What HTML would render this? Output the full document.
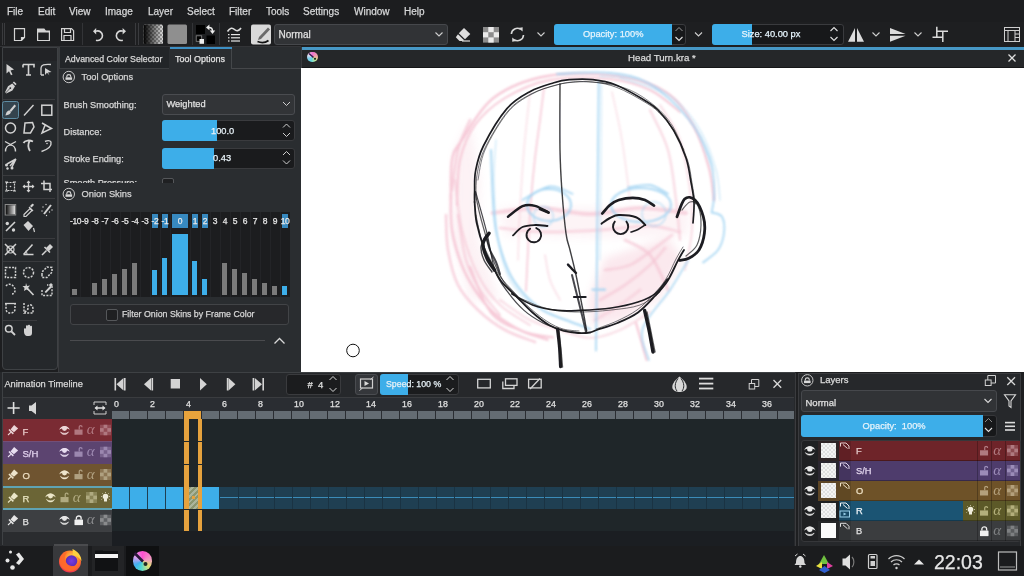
<!DOCTYPE html>
<html><head><meta charset="utf-8">
<style>
*{box-sizing:border-box}
html,body{margin:0;padding:0;width:1024px;height:576px;overflow:hidden;background:#1d1e20;font-family:"Liberation Sans",sans-serif;color:#d6d7d8}
.a{position:absolute}
.t{position:absolute;white-space:nowrap;line-height:1;-webkit-text-stroke:0.25px currentColor}
svg{position:absolute;overflow:visible;z-index:5}
.t{z-index:6}
</style></head><body>
<!-- MENU BAR -->
<div class="a" style="left:0;top:0;width:1024px;height:22px;background:#1c1d1f"></div>
<div class="t" style="left:7px;top:7px;font-size:10px">File</div>
<div class="t" style="left:38px;top:7px;font-size:10px">Edit</div>
<div class="t" style="left:69px;top:7px;font-size:10px">View</div>
<div class="t" style="left:105px;top:7px;font-size:10px">Image</div>
<div class="t" style="left:148px;top:7px;font-size:10px">Layer</div>
<div class="t" style="left:187px;top:7px;font-size:10px">Select</div>
<div class="t" style="left:229px;top:7px;font-size:10px">Filter</div>
<div class="t" style="left:266px;top:7px;font-size:10px">Tools</div>
<div class="t" style="left:303px;top:7px;font-size:10px">Settings</div>
<div class="t" style="left:354px;top:7px;font-size:10px">Window</div>
<div class="t" style="left:404px;top:7px;font-size:10px">Help</div>

<!-- TOOLBAR -->
<div class="a" style="left:0;top:22px;width:1024px;height:25px;background:#1e1f21"></div>
<div class="a" style="left:0;top:45.5px;width:301px;height:1.5px;background:#333437"></div>
<div class="a" style="left:2px;top:23px;width:1px;height:22px;background:#3a3b3e"></div>
<div class="a" style="left:4px;top:23px;width:1px;height:22px;background:#3a3b3e"></div>
<div class="a" style="left:82px;top:23px;width:1px;height:22px;background:#333437"></div>
<div class="a" style="left:135px;top:23px;width:1px;height:22px;background:#3a3b3e"></div>
<div class="a" style="left:138px;top:23px;width:1px;height:22px;background:#3a3b3e"></div>
<div class="a" style="left:192px;top:23px;width:1px;height:22px;background:#333437"></div>
<div class="a" style="left:219px;top:23px;width:1px;height:22px;background:#333437"></div>
<svg style="left:0;top:0" width="1024" height="47" viewBox="0 0 1024 47">
 <g fill="none" stroke="#d4d4d4" stroke-width="1.2">
  <!-- new -->
  <path d="M14.5 28.6 H24.5 V37.5 L21.5 40.5 H14.5 Z"/>
  <path d="M24.5 37.5 H21.5 V40.5" fill="#e0e0e0"/>
  <!-- open -->
  <path d="M37.6 29 H44 L45.5 31 H49.4 V40.5 H37.6 Z"/>
  <path d="M37.6 31.5 V29 H44 L45.5 31 H49.4 V32.5 H37.6 Z" fill="#d4d4d4" stroke="none"/>
  <!-- save -->
  <path d="M61.6 28.6 H71.5 L73.6 30.7 V40.5 H61.6 Z"/>
  <path d="M64.5 28.6 V32.5 H70.5 V28.6 M64 40.5 V35.5 H71 V40.5"/>
 </g>
 <g fill="none" stroke="#d8d8d8" stroke-width="1.6">
  <path d="M96 31.2 A4.8 4.8 0 1 1 96 40.2"/>
  <path d="M122.8 31.2 A4.8 4.8 0 1 0 122.8 40.2"/>
 </g>
 <path d="M93 31.2 L96.2 28 V34.4 Z" fill="#d8d8d8"/>
 <path d="M126 31.2 L122.6 28 V34.4 Z" fill="#d8d8d8"/>
 <!-- gradient -->
 <defs>
  <pattern id="chk" width="4" height="4" patternUnits="userSpaceOnUse" x="0" y="0">
   <rect width="4" height="4" fill="#9a9a9a"/><rect width="2" height="2" fill="#dcdcdc"/><rect x="2" y="2" width="2" height="2" fill="#dcdcdc"/>
  </pattern>
  <linearGradient id="grd" x1="0" x2="1"><stop offset="0" stop-color="#000"/><stop offset="1" stop-color="#000" stop-opacity="0"/></linearGradient>
 </defs>
 <rect x="143.5" y="24.5" width="19.5" height="19.5" rx="1.5" fill="url(#chk)"/>
 <rect x="143.5" y="24.5" width="19.5" height="19.5" rx="1.5" fill="url(#grd)"/>
 <rect x="167.5" y="24.5" width="19.5" height="19.5" rx="1.5" fill="#8f8f8f"/>
 <!-- fg bg -->
 <rect x="196" y="25" width="9" height="9" fill="#000"/>
 <rect x="206.5" y="35.5" width="8.5" height="8.5" fill="#000"/>
 <rect x="196.2" y="35.8" width="5.5" height="5.5" fill="#000" stroke="#8a8a8a" stroke-width="0.8"/>
 <rect x="199.5" y="39" width="4.5" height="4.8" fill="#eee"/>
 <path d="M206 27.4 L209.4 24.6 V30.2 Z M212.5 34 L209.8 30.6 H215.2 Z" fill="#ececec"/>
 <path d="M209 27.4 C211.5 27.4 212.5 28.5 212.5 31" fill="none" stroke="#ececec" stroke-width="1.5"/>
 <!-- presets -->
 <path d="M227.5 31.5 C230 27.5 232.5 27.5 234.5 29.5 C236.5 31.5 239 31 241 28" fill="none" stroke="#dcdcdc" stroke-width="1.6"/>
 <g fill="#e6e6e6"><rect x="228" y="34" width="1.5" height="1.2"/><rect x="231" y="34" width="9" height="1.2"/>
 <rect x="228" y="37.2" width="1.5" height="1.2"/><rect x="231" y="37.2" width="9" height="1.2"/>
 <rect x="228" y="40.4" width="1.5" height="1.2"/><rect x="231" y="40.4" width="9" height="1.2"/></g>
 <!-- brush tip -->
 <rect x="251" y="24.5" width="20" height="20" rx="2" fill="#d9d9d9"/>
 <path d="M259 37 L268 27.5 L270 29.5 L261 39 L258 40 Z" fill="#6a6a6a"/>
 <path d="M257.5 41.5 C261 43 265 43 268.5 40.5" stroke="#111" stroke-width="1.8" fill="none"/>
 <!-- eraser -->
 <path d="M464 28 L470.3 34 L465 39.3 L458.8 33.3 Z" fill="#dedede"/>
 <path d="M458 34.2 L464.2 40.2 L462.6 41 H459.5 L455.8 37.2 Z" fill="#dedede"/>
 <path d="M462 41 H470" stroke="#dedede" stroke-width="1.2"/>
 <!-- checker -->
 <g>
  <rect x="483" y="27" width="16" height="15.6" fill="#8c8c8c"/>
  <rect x="488.3" y="27" width="5.4" height="5.2" fill="#ebebeb"/>
  <rect x="483" y="32.2" width="5.3" height="5.2" fill="#ebebeb"/><rect x="493.7" y="32.2" width="5.3" height="5.2" fill="#ebebeb"/>
  <rect x="488.3" y="37.4" width="5.4" height="5.2" fill="#ebebeb"/>
 </g>
 <!-- refresh -->
 <g transform="rotate(-10 517.3 34.3)">
 <g fill="none" stroke="#d8d8d8" stroke-width="1.6">
  <path d="M511.5 33 A6 6 0 0 1 521.5 30"/>
  <path d="M523.3 36 A6 6 0 0 1 513.3 39"/>
 </g>
 <path d="M519.5 28.3 L523.8 28.3 L523 32.5 Z M515.3 40.7 L511 40.7 L511.8 36.5 Z" fill="#d8d8d8"/>
 </g>
 <!-- chevrons -->
 <g fill="none" stroke="#cfcfcf" stroke-width="1.1">
  <path d="M435.5 32.5 L439 36 L442.5 32.5"/>
  <path d="M537.5 32.5 L541 36 L544.5 32.5"/>
  <path d="M695 32.5 L698.5 36 L702 32.5"/>
  <path d="M872.5 32.5 L876 36 L879.5 32.5"/>
  <path d="M914.5 32.5 L918 36 L921.5 32.5"/>
 </g>
 <!-- mirror -->
 <path d="M855 28 V41.7 H848 Z M857 28 V41.7 H864 Z" fill="#dcdcdc"/>
 <path d="M890 28 L905.6 34 H890 Z M890 35.8 H905.6 L890 41.7 Z" fill="#dcdcdc"/>
 <!-- crop-like -->
 <g fill="none" stroke="#dcdcdc" stroke-width="1.5">
  <path d="M936.8 26.8 V37.2 M932.5 37.2 H943 M936.8 31.2 H948 M942.8 31.2 V42"/>
 </g>
 <!-- right layout icon -->
 <rect x="1004.5" y="27.5" width="15" height="14" fill="none" stroke="#cfcfcf" stroke-width="1"/>
 <path d="M1004.5 30.5 H1019.5 M1008 30.5 V41.5 M1015 30.5 V41.5 M1015 34 H1019.5 M1015 37.5 H1019.5" stroke="#cfcfcf" stroke-width="1" fill="none"/>
</svg>
<!-- combo Normal -->
<div class="a" style="left:274px;top:23.5px;width:174px;height:21px;background:#313336;border:1px solid #46484c;border-radius:3px"></div>
<div class="t" style="left:278.5px;top:30px;font-size:10px;color:#e0e0e0">Normal</div>
<!-- opacity -->
<div class="a" style="left:554px;top:23.5px;width:132px;height:21px;background:#17181a;border:1px solid #3a3b3e;border-radius:3px"></div>
<div class="a" style="left:554px;top:23.5px;width:118px;height:21px;background:#3daee9;border-radius:3px 0 0 3px"></div>
<div class="t" style="left:583px;top:30px;font-size:9.3px;color:#e6f4fc">Opacity: 100%</div>
<!-- size -->
<div class="a" style="left:711.5px;top:23.5px;width:132px;height:21px;background:#17181a;border:1px solid #3a3b3e;border-radius:3px"></div>
<div class="a" style="left:711.5px;top:23.5px;width:40.5px;height:21px;background:#3daee9;border-radius:3px 0 0 3px"></div>
<div class="t" style="left:741.5px;top:30px;font-size:9.3px;color:#e6f4fc">Size: 40.00 px</div>
<svg style="left:0;top:0" width="1024" height="47">
 <g fill="none" stroke="#9a9a9a" stroke-width="1">
  <path d="M675.5 31 L679 27.5 L682.5 31"/>
 </g>
 <g fill="none" stroke="#e0e0e0" stroke-width="1.1">
  <path d="M675.5 37 L679 40.5 L682.5 37"/>
  <path d="M830.5 31 L834 27.5 L837.5 31"/>
  <path d="M830.5 37 L834 40.5 L837.5 37"/>
 </g>
</svg>

<!-- TOOLBOX -->
<div class="a" style="left:2px;top:47px;width:56px;height:323px;background:#25282b;border:1px solid #3e4144;border-radius:0 0 4px 4px"></div>
<div class="a" style="left:3px;top:48px;width:54px;height:13px;background:#222326"></div>
<svg style="left:0;top:0" width="60" height="372">
 <g stroke="#3a3b3e" stroke-width="1">
  <path d="M3 99.5 H55 M3 175.5 H55 M3 198.5 H55 M3 238.5 H55 M3 261.5 H55 M3 320.5 H37"/>
 </g>
 <rect x="2.5" y="101.5" width="16" height="17" rx="2" fill="#34444e" stroke="#5d8ca3" stroke-width="1"/>
 <g fill="#d2d2d2" stroke="#d2d2d2">
  <!-- select shape arrow -->
  <path d="M6.5 64 L14 69.5 L10.5 70.5 L12.5 74.5 L11 75.2 L9 71.3 L6.5 73.5 Z" stroke="none"/>
  <!-- T -->
  <path d="M23 64.5 H34 V67.5 M23 64.5 V67.5 M28.5 64.5 V75 M26 75 H31" fill="none" stroke-width="1.6"/>
  <!-- shape edit -->
  <path d="M41 75 V68 C41 65 44 64 51 64.5 M41 75 H44" fill="none" stroke-width="1.3"/>
  <path d="M45 68 L51.5 72 L48 72.5 L49.5 75.5 L47 72.8 L45 75 Z" stroke="none"/>
  <!-- pen (calligraphy) -->
  <path d="M5 92.3 L8 86.2 L12.3 83.6 L15 86.3 L12.4 90.6 L6.3 93.6 Z" stroke="none"/>
  <path d="M12.8 82.6 L14 81.4 L16.6 84 L15.4 85.2 Z" stroke="none"/>
  <circle cx="10.3" cy="88.1" r="0.9" fill="#25282b" stroke="none"/>
  <path d="M5.6 93 L10 88.4" stroke="#25282b" stroke-width="0.7"/>
  <!-- brush -->
  <path d="M14.5 104.5 L16 106 L11 112 L9.5 110.5 Z" stroke="none"/>
  <path d="M9.5 110.5 C7 110.5 6 113 5.5 115.5 C8 115 10.5 114.5 11 112 Z" stroke="none"/>
  <!-- line -->
  <path d="M24 115.5 L33.5 105" fill="none" stroke-width="1.4"/>
  <!-- rect -->
  <rect x="41.8" y="105.2" width="10" height="10" fill="none" stroke-width="1.5"/>
  <!-- circle -->
  <circle cx="10.5" cy="128" r="5" fill="none" stroke-width="1.5"/>
  <!-- polygon -->
  <path d="M25 123 L32.5 122.5 L34 127 L30.5 133 L24 133 Z" fill="none" stroke-width="1.5"/>
  <!-- polyline -->
  <path d="M42 123 L51.5 128.5 L42 133 L45.5 124" fill="none" stroke-width="1.5"/>
  <!-- bezier -->
  <path d="M5.5 151.5 C5.5 143 15.5 143 15.5 151.5 M5 141.5 L10.5 144.5 L16 141.5" fill="none" stroke-width="1.4"/>
  <!-- freehand path -->
  <path d="M23.5 143 C25 140 30 140 33 141.5 M29.5 141 C28 144 28 148 30 151" fill="none" stroke-width="1.8"/>
  <!-- dynamic -->
  <path d="M41.5 151.5 C46 150 52 147 51 142 C50 140 47 140.5 45 141.5" fill="none" stroke-width="1.4"/>
  <circle cx="47" cy="143.5" r="0.8" stroke="none"/>
  <!-- multibrush -->
  <path d="M16 159 L7 164 M16 159 L12 167 M16 159 L10 166" fill="none" stroke-width="1.5"/>
  <circle cx="6.5" cy="165" r="1.5" stroke="none"/><circle cx="12" cy="168" r="1.5" stroke="none"/><circle cx="7.5" cy="168.5" r="1.2" stroke="none"/>
  <!-- transform -->
  <rect x="6.5" y="182.5" width="8" height="8" fill="none" stroke-width="1.2" stroke-dasharray="2 1"/>
  <path d="M5 182 H8 M13 182 H16 M5 191 H8 M13 191 H16" stroke-width="1"/>
  <circle cx="10.5" cy="186.5" r="0.8" stroke="none"/>
  <!-- move -->
  <path d="M28.5 181 V192 M23 186.5 H34" fill="none" stroke-width="1.4"/>
  <path d="M28.5 180.5 L26.5 183 H30.5 Z M28.5 192.5 L26.5 190 H30.5 Z M22.5 186.5 L25 184.5 V188.5 Z M34.5 186.5 L32 184.5 V188.5 Z" stroke="none"/>
  <!-- crop -->
  <path d="M44 180.5 V189.5 H52 M41 183.5 H50 V192" fill="none" stroke-width="1.5"/>
  <!-- gradient tool -->
  <rect x="5.2" y="204.5" width="10.5" height="10.5" fill="none" stroke="#8a8a8a" stroke-width="1"/>
  <!-- color picker -->
  <path d="M24 214.5 L30 208.5 L32 210.5 L26 216.5 L24 216.5 Z" fill="none" stroke-width="1.2"/>
  <path d="M30 206 L32 204 C33 203 34.5 204.5 33.5 205.5 L31.5 207.5 Z" stroke="none"/>
  <path d="M29 207 L33 211" stroke-width="1.3"/>
  <!-- smart patch -->
  <path d="M44 214 L51 205" stroke-width="2"/>
  <g stroke="none"><circle cx="43" cy="207" r="0.7"/><circle cx="46" cy="204.5" r="0.7"/><circle cx="49.5" cy="212" r="0.7"/><circle cx="52" cy="210" r="0.7"/><circle cx="46.5" cy="215.5" r="0.7"/><circle cx="42" cy="211" r="0.7"/></g>
  <!-- percent (deform) -->
  <path d="M6 231 L15 222" stroke-width="1.6"/>
  <circle cx="7.3" cy="223.5" r="1.7" stroke="none"/><circle cx="13.5" cy="230" r="1.7" stroke="none"/>
  <!-- fill -->
  <path d="M23.5 225 L28 221 L33 226 L28.5 231 Z" stroke="none"/>
  <path d="M33.5 228 L34.5 232" stroke-width="1.2"/>
  <!-- assistant -->
  <circle cx="10.5" cy="249.5" r="3.5" fill="none" stroke-width="1.2"/>
  <path d="M5 244 L16 255 M16 244 L5 255" fill="none" stroke-width="1.5"/>
  <!-- measure -->
  <path d="M23.5 254.5 H33.5 M23.5 254.5 L32.5 244.5" fill="none" stroke-width="1.5"/>
  <path d="M27 254.5 C27 252 26 251 25.5 251" fill="none" stroke-width="1"/>
  <!-- ref pin -->
  <path d="M46 248 L50 244 L53 247 L49 251 Z" stroke="none"/>
  <path d="M44.5 247 L50 252.5 M46.5 250.5 L42 255" stroke-width="1.5"/>
  <!-- rect select -->
  <rect x="5.5" y="267.5" width="10" height="10" fill="none" stroke-width="1.5" stroke-dasharray="2 1.3"/>
  <circle cx="28.5" cy="272.5" r="5" fill="none" stroke-width="1.5" stroke-dasharray="2 1.3"/>
  <path d="M42 275 L42 272 L47 267 L52 267.5 L52 272 L47 277.5 L42 277.5 Z" fill="none" stroke-width="1.5" stroke-dasharray="2 1.3"/>
  <!-- freehand sel -->
  <path d="M6 286 C8 283 12 284 14 287 C16 290 15 294 12 294" fill="none" stroke-width="1.5" stroke-dasharray="2 1.3"/>
  <!-- wand -->
  <path d="M27 288 L33.5 295" stroke-width="1.6"/>
  <path d="M26 283 L27 286 L30 285.5 L28 288 L29.5 291 L26.5 289.5 L24 291 L24.5 288 L22.5 286 L25.5 286 Z" stroke="none"/>
  <!-- similar sel -->
  <path d="M42 290 V295.5 H52 V285 H47" fill="none" stroke-width="1.4" stroke-dasharray="2 1.3"/>
  <path d="M44.5 292 L50 286 L51.5 287.5 L46 293 Z M49 285 L51 283 L53 285 L51 287 Z" stroke="none"/>
  <!-- bezier sel -->
  <path d="M6 303.5 V309 C6 314.5 15 314.5 15 309 V303.5" fill="none" stroke-width="1.5" stroke-dasharray="2 1.3"/>
  <path d="M5 303.5 H16" stroke-width="1.3"/>
  <!-- path sel -->
  <path d="M24 303 V313 H33 V309 C33 303 26 304 28 309 L24 313" fill="none" stroke-width="1.5" stroke-dasharray="2 1.3"/>
  <!-- zoom -->
  <circle cx="8.8" cy="328.8" r="3.3" fill="none" stroke-width="1.5"/>
  <path d="M11.5 331.5 L15 335" stroke-width="1.8"/>
  <!-- pan -->
  <path d="M24 329 C24 328 26 328 26 329 V326 C26 325 28 325 28 326 V325.5 C28 324.5 30 324.5 30 325.5 V326.5 C30 325.5 32 325.5 32 326.5 V333 C32 335 31 336 29 336 H27 C25.5 336 24 334 24 332 Z" stroke="none"/>
 </g>
 <!-- gradient fill inside -->
 <defs><linearGradient id="tg" x1="0" x2="1"><stop offset="0" stop-color="#111"/><stop offset="1" stop-color="#ddd"/></linearGradient></defs>
 <rect x="6" y="205.3" width="9" height="9" fill="url(#tg)"/>
</svg>

<!-- DOCKER -->
<div class="a" style="left:58px;top:47px;width:243px;height:325px;background:#2a2d30"></div>
<div class="a" style="left:58px;top:47px;width:1px;height:325px;background:#3a3b3e"></div>
<!-- tabs -->
<div class="a" style="left:58.5px;top:47px;width:111px;height:21.5px;background:#222528;border:1px solid #3a3d40;border-top:none"></div>
<div class="a" style="left:169px;top:47px;width:62.5px;height:22px;background:#2a2d30;border-right:1px solid #44474a"></div>
<div class="a" style="left:169.5px;top:47px;width:62px;height:2px;background:#3d8fc4"></div>
<div class="a" style="left:232px;top:68px;width:69px;height:1px;background:#45474a"></div>
<div class="t" style="left:65px;top:55px;font-size:8.8px;color:#d8d8d8">Advanced Color Selector</div>
<div class="t" style="left:175px;top:55px;font-size:9px;color:#e2e2e2">Tool Options</div>
<!-- Tool options header -->
<svg style="left:0;top:0" width="300" height="372">
 <g fill="none" stroke="#c8c8c8" stroke-width="1">
  <circle cx="68.8" cy="77" r="5.7"/>
  <circle cx="68.8" cy="194" r="5.7"/>
 </g>
 <g fill="#d8d8d8">
  <path d="M65.5 79.8 V77.3 H72.1 V79.8 Z" fill="#d8d8d8"/><path d="M66.8 77.3 V76.4 C66.8 74 70.8 74 70.8 76.4 V77.3" fill="none" stroke="#d8d8d8" stroke-width="1.1"/>
  <path d="M65.5 196.8 V194.3 H72.1 V196.8 Z" fill="#d8d8d8"/><path d="M66.8 194.3 V193.4 C66.8 191 70.8 191 70.8 193.4 V194.3" fill="none" stroke="#d8d8d8" stroke-width="1.1"/>
 </g>
</svg>
<div class="t" style="left:81.5px;top:73px;font-size:9.3px;color:#d4d4d4">Tool Options</div>
<div class="t" style="left:63.5px;top:100.5px;font-size:9.2px;color:#d8d8d8">Brush Smoothing:</div>
<div class="t" style="left:63.5px;top:128px;font-size:9.2px;color:#d8d8d8">Distance:</div>
<div class="t" style="left:63.5px;top:154.5px;font-size:9.2px;color:#d8d8d8">Stroke Ending:</div>
<div class="a" style="left:58px;top:176px;width:243px;height:7px;overflow:hidden"><div class="t" style="left:5.5px;top:3px;font-size:9.2px;color:#d8d8d8">Smooth Pressure:</div><div class="a" style="left:104px;top:2px;width:12px;height:12px;border:1px solid #55575a;border-radius:2px;background:#1f2022"></div></div>
<!-- combo weighted -->
<div class="a" style="left:162px;top:93.5px;width:133px;height:21px;background:#323437;border:1px solid #4a4c50;border-radius:3px"></div>
<div class="t" style="left:166.5px;top:99.5px;font-size:9.3px;color:#e0e0e0">Weighted</div>
<!-- sliders -->
<div class="a" style="left:162px;top:120px;width:133px;height:21px;background:#1a1b1d;border:1px solid #3a3b3e;border-radius:3px"></div>
<div class="a" style="left:162px;top:120px;width:55px;height:21px;background:#3daee9;border-radius:3px 0 0 3px"></div>
<div class="t" style="left:211px;top:126.5px;font-size:9.3px;color:#e8f2f8">100.0</div>
<div class="a" style="left:162px;top:147.5px;width:133px;height:21px;background:#1a1b1d;border:1px solid #3a3b3e;border-radius:3px"></div>
<div class="a" style="left:162px;top:147.5px;width:51.5px;height:21px;background:#3daee9;border-radius:3px 0 0 3px"></div>
<div class="t" style="left:213px;top:153.5px;font-size:9.3px;color:#e8f2f8">0.43</div>
<svg style="left:0;top:0" width="300" height="372">
 <g fill="none" stroke="#d0d0d0" stroke-width="1">
  <path d="M283 102 L286.5 105.5 L290 102"/>
  <path d="M283 127.5 L286.5 124 L290 127.5 M283 133 L286.5 136.5 L290 133"/>
  <path d="M283 155 L286.5 151.5 L290 155 M283 160.5 L286.5 164 L290 160.5"/>
 </g>
</svg>
<!-- Onion skins -->
<div class="t" style="left:81.5px;top:190px;font-size:9.3px;color:#d4d4d4">Onion Skins</div>
<div class="a" style="left:70px;top:212px;width:220px;height:85px;background:#1c1d1f"></div>
<div class="a" style="left:72px;top:289px;width:5px;height:6px;background:#7b7b7b"></div>
<div class="t" style="left:70px;top:216.5px;width:10px;text-align:center;font-size:8.5px;letter-spacing:-0.4px;color:#e8e8e8">-10</div>
<div class="a" style="left:80px;top:212px;width:1px;height:85px;background:#232427"></div>
<div class="t" style="left:80px;top:216.5px;width:10px;text-align:center;font-size:8.5px;letter-spacing:-0.4px;color:#e8e8e8">-9</div>
<div class="a" style="left:90px;top:212px;width:1px;height:85px;background:#232427"></div>
<div class="a" style="left:92px;top:282.7px;width:5px;height:12.300000000000011px;background:#7b7b7b"></div>
<div class="t" style="left:90px;top:216.5px;width:10px;text-align:center;font-size:8.5px;letter-spacing:-0.4px;color:#e8e8e8">-8</div>
<div class="a" style="left:100px;top:212px;width:1px;height:85px;background:#232427"></div>
<div class="a" style="left:102px;top:278.8px;width:5px;height:16.19999999999999px;background:#7b7b7b"></div>
<div class="t" style="left:100px;top:216.5px;width:10px;text-align:center;font-size:8.5px;letter-spacing:-0.4px;color:#e8e8e8">-7</div>
<div class="a" style="left:110px;top:212px;width:1px;height:85px;background:#232427"></div>
<div class="a" style="left:112px;top:273.5px;width:5px;height:21.5px;background:#7b7b7b"></div>
<div class="t" style="left:110px;top:216.5px;width:10px;text-align:center;font-size:8.5px;letter-spacing:-0.4px;color:#e8e8e8">-6</div>
<div class="a" style="left:120px;top:212px;width:1px;height:85px;background:#232427"></div>
<div class="a" style="left:122px;top:269px;width:5px;height:26px;background:#7b7b7b"></div>
<div class="t" style="left:120px;top:216.5px;width:10px;text-align:center;font-size:8.5px;letter-spacing:-0.4px;color:#e8e8e8">-5</div>
<div class="a" style="left:130px;top:212px;width:1px;height:85px;background:#232427"></div>
<div class="a" style="left:132px;top:263px;width:5px;height:32px;background:#7b7b7b"></div>
<div class="t" style="left:130px;top:216.5px;width:10px;text-align:center;font-size:8.5px;letter-spacing:-0.4px;color:#e8e8e8">-4</div>
<div class="a" style="left:140px;top:212px;width:1px;height:85px;background:#232427"></div>
<div class="t" style="left:140px;top:216.5px;width:10px;text-align:center;font-size:8.5px;letter-spacing:-0.4px;color:#e8e8e8">-3</div>
<div class="a" style="left:150px;top:212px;width:1px;height:85px;background:#232427"></div>
<div class="a" style="left:152px;top:213.5px;width:6px;height:14px;background:#3789bf"></div>
<div class="a" style="left:152px;top:269.7px;width:5px;height:25.30000000000001px;background:#3daee9"></div>
<div class="t" style="left:150px;top:216.5px;width:10px;text-align:center;font-size:8.5px;letter-spacing:-0.4px;color:#e8e8e8">-2</div>
<div class="a" style="left:160px;top:212px;width:1px;height:85px;background:#232427"></div>
<div class="a" style="left:162px;top:213.5px;width:6px;height:14px;background:#3789bf"></div>
<div class="a" style="left:162px;top:258px;width:5px;height:37px;background:#3daee9"></div>
<div class="t" style="left:160px;top:216.5px;width:10px;text-align:center;font-size:8.5px;letter-spacing:-0.4px;color:#e8e8e8">-1</div>
<div class="a" style="left:170px;top:212px;width:1px;height:85px;background:#232427"></div>
<div class="a" style="left:172px;top:213.5px;width:16px;height:14px;background:#3789bf"></div>
<div class="a" style="left:172px;top:233.5px;width:16px;height:61.5px;background:#3daee9"></div>
<div class="t" style="left:170px;top:216.5px;width:20px;text-align:center;font-size:8.5px;letter-spacing:-0.4px;color:#e8e8e8">0</div>
<div class="a" style="left:190px;top:212px;width:1px;height:85px;background:#232427"></div>
<div class="a" style="left:192px;top:213.5px;width:6px;height:14px;background:#3789bf"></div>
<div class="a" style="left:192px;top:261px;width:5px;height:34px;background:#3daee9"></div>
<div class="t" style="left:190px;top:216.5px;width:10px;text-align:center;font-size:8.5px;letter-spacing:-0.4px;color:#e8e8e8">1</div>
<div class="a" style="left:200px;top:212px;width:1px;height:85px;background:#232427"></div>
<div class="a" style="left:202px;top:213.5px;width:6px;height:14px;background:#3789bf"></div>
<div class="a" style="left:202px;top:278.8px;width:5px;height:16.19999999999999px;background:#3daee9"></div>
<div class="t" style="left:200px;top:216.5px;width:10px;text-align:center;font-size:8.5px;letter-spacing:-0.4px;color:#e8e8e8">2</div>
<div class="a" style="left:210px;top:212px;width:1px;height:85px;background:#232427"></div>
<div class="t" style="left:210px;top:216.5px;width:10px;text-align:center;font-size:8.5px;letter-spacing:-0.4px;color:#e8e8e8">3</div>
<div class="a" style="left:220px;top:212px;width:1px;height:85px;background:#232427"></div>
<div class="a" style="left:222px;top:263px;width:5px;height:32px;background:#7b7b7b"></div>
<div class="t" style="left:220px;top:216.5px;width:10px;text-align:center;font-size:8.5px;letter-spacing:-0.4px;color:#e8e8e8">4</div>
<div class="a" style="left:230px;top:212px;width:1px;height:85px;background:#232427"></div>
<div class="a" style="left:232px;top:269px;width:5px;height:26px;background:#7b7b7b"></div>
<div class="t" style="left:230px;top:216.5px;width:10px;text-align:center;font-size:8.5px;letter-spacing:-0.4px;color:#e8e8e8">5</div>
<div class="a" style="left:240px;top:212px;width:1px;height:85px;background:#232427"></div>
<div class="a" style="left:242px;top:273.4px;width:5px;height:21.600000000000023px;background:#7b7b7b"></div>
<div class="t" style="left:240px;top:216.5px;width:10px;text-align:center;font-size:8.5px;letter-spacing:-0.4px;color:#e8e8e8">6</div>
<div class="a" style="left:250px;top:212px;width:1px;height:85px;background:#232427"></div>
<div class="a" style="left:252px;top:278.8px;width:5px;height:16.19999999999999px;background:#7b7b7b"></div>
<div class="t" style="left:250px;top:216.5px;width:10px;text-align:center;font-size:8.5px;letter-spacing:-0.4px;color:#e8e8e8">7</div>
<div class="a" style="left:260px;top:212px;width:1px;height:85px;background:#232427"></div>
<div class="a" style="left:262px;top:282.6px;width:5px;height:12.399999999999977px;background:#7b7b7b"></div>
<div class="t" style="left:260px;top:216.5px;width:10px;text-align:center;font-size:8.5px;letter-spacing:-0.4px;color:#e8e8e8">8</div>
<div class="a" style="left:270px;top:212px;width:1px;height:85px;background:#232427"></div>
<div class="a" style="left:272px;top:286.3px;width:5px;height:8.699999999999989px;background:#7b7b7b"></div>
<div class="t" style="left:270px;top:216.5px;width:10px;text-align:center;font-size:8.5px;letter-spacing:-0.4px;color:#e8e8e8">9</div>
<div class="a" style="left:280px;top:212px;width:1px;height:85px;background:#232427"></div>
<div class="a" style="left:282px;top:213.5px;width:6px;height:14px;background:#3789bf"></div>
<div class="a" style="left:282px;top:285.5px;width:5px;height:9.5px;background:#3daee9"></div>
<div class="t" style="left:280px;top:216.5px;width:10px;text-align:center;font-size:8.5px;letter-spacing:-0.4px;color:#e8e8e8">10</div>
<!-- filter button -->
<div class="a" style="left:70px;top:303.5px;width:219px;height:21.5px;background:#27282b;border:1px solid #424447;border-radius:3px"></div>
<div class="a" style="left:105.5px;top:308.5px;width:12px;height:12px;background:#1f2022;border:1px solid #55575a;border-radius:2px"></div>
<div class="t" style="left:122px;top:310px;font-size:8.8px;color:#d6d6d6">Filter Onion Skins by Frame Color</div>
<div class="a" style="left:70px;top:340px;width:195px;height:1px;background:#4a4b4e"></div>
<svg style="left:0;top:0" width="300" height="372"><path d="M274.5 343.5 L279.5 338.5 L284.5 343.5" fill="none" stroke="#d8d8d8" stroke-width="1.3"/></svg>

<!-- CANVAS -->
<div class="a" style="left:301px;top:46.5px;width:723px;height:3px;background:#4798c6"></div>
<div class="a" style="left:301px;top:49.5px;width:723px;height:18.5px;background:#252729"></div>
<div class="a" style="left:301px;top:67px;width:723px;height:1px;background:#161718"></div>
<div class="a" style="left:301px;top:68px;width:723px;height:304px;background:#fff"></div>
<div class="t" style="left:628px;top:53px;font-size:9.7px;color:#dcdcdc">Head Turn.kra *</div>
<div class="a" style="left:307px;top:51.7px;width:10.8px;height:10.8px;border-radius:50%;background:conic-gradient(from 0deg,#f070d0,#f0b0a0 90deg,#d0e890 130deg,#60d8e0 200deg,#80d0f0 250deg,#f0e0f0 300deg,#f070d0)"></div>
<div class="a" style="left:301px;top:47px;width:1px;height:21px;background:#3a3b3e"></div>
<svg style="left:0;top:0" width="1024" height="372">
 <defs>
  <filter id="soft" x="-10%" y="-10%" width="120%" height="120%"><feGaussianBlur stdDeviation="0.9"/></filter>
  <filter id="soft2" x="-10%" y="-10%" width="120%" height="120%"><feGaussianBlur stdDeviation="0.45"/></filter>
  <linearGradient id="kg" x1="0" y1="0" x2="1" y2="1"><stop offset="0" stop-color="#e040c0"/><stop offset="0.5" stop-color="#f0a0e0"/><stop offset="1" stop-color="#40d0e0"/></linearGradient>
 </defs>
 <path d="M309 53.5 L313.5 57.5" stroke="#3a1a50" stroke-width="1.6"/>
 <circle cx="315" cy="58.8" r="1.1" fill="#1a2a20"/>
 <path d="M1008.5 54.5 L1015.5 61.5 M1015.5 54.5 L1008.5 61.5" stroke="#e0e0e0" stroke-width="1.3"/>
</svg>
<!--SK--><svg style="left:0;top:0" width="1024" height="372">
 <defs><filter id="wash" x="-30%" y="-30%" width="160%" height="160%"><feGaussianBlur stdDeviation="4"/></filter></defs>
 <g fill="#f4c4d2" opacity="0.38" filter="url(#wash)">
  <path d="M605 258 L668 238 L682 258 L660 298 L625 320 L592 326 L588 300 Z"/>
  <path d="M500 208 L690 206 L688 236 L600 238 L505 236 Z" opacity="0.5"/>
  <path d="M455 150 L470 120 L480 180 L478 240 L500 300 L470 300 L452 240 Z" opacity="0.6"/>
 </g>
 <g fill="none" stroke="#f4bccd" stroke-linecap="round" opacity="0.8" filter="url(#soft)">
<path d="M451.0 200.0 C451.2 193.3 450.2 169.9 452.0 160.0 C453.8 150.1 454.5 151.1 461.5 140.7 C468.5 130.3 479.4 108.5 493.8 97.7 C508.2 86.9 527.0 79.6 547.6 76.0 C568.2 72.4 597.8 73.3 617.5 76.0 C637.2 78.7 653.5 84.2 666.0 92.3 C678.5 100.4 685.6 112.0 692.8 124.5 C700.0 137.1 705.5 155.0 709.0 167.6 C712.5 180.2 713.2 194.6 714.0 200.0" stroke-width="2.4"/>
<path d="M457.0 205.0 C457.5 197.5 457.0 173.3 460.0 160.0 C463.0 146.7 467.5 135.3 475.0 125.0 C482.5 114.7 492.5 105.5 505.0 98.0 C517.5 90.5 532.5 83.2 550.0 80.0 C567.5 76.8 593.3 77.3 610.0 79.0 C626.7 80.7 638.3 84.5 650.0 90.0 C661.7 95.5 675.0 108.3 680.0 112.0" stroke-width="2.0"/>
<path d="M450.8 194.5 C451.0 200.4 450.2 218.3 452.0 230.0 C453.8 241.7 457.7 254.4 461.5 264.4 C465.3 274.4 469.6 281.9 475.0 290.0 C480.4 298.1 486.0 306.0 493.8 312.8 C501.6 319.6 513.0 326.5 522.0 331.0 C531.0 335.5 543.3 338.2 547.6 339.7" stroke-width="2.4"/>
<path d="M470.0 266.7 C473.5 274.3 482.1 301.8 490.8 312.5 C499.5 323.2 511.6 326.8 522.0 331.0 C532.4 335.2 547.8 336.4 553.0 337.5" stroke-width="2.0"/>
<path d="M458.0 215.0 C459.3 222.5 462.3 247.5 466.0 260.0 C469.7 272.5 474.3 280.8 480.0 290.0 C485.7 299.2 496.7 310.8 500.0 315.0" stroke-width="2.0" opacity="0.8"/>
<path d="M544.0 88.0 C543.3 93.3 541.5 108.3 540.0 120.0 C538.5 131.7 536.5 144.7 535.0 158.0 C533.5 171.3 532.2 184.7 531.0 200.0 C529.8 215.3 528.8 234.8 528.0 250.0 C527.2 265.2 526.3 284.2 526.0 291.0" stroke-width="1.6"/>
<path d="M492.5 213.0 C500.4 212.2 523.8 207.8 540.0 208.0 C556.2 208.2 573.3 214.0 590.0 214.0 C606.7 214.0 624.0 208.2 640.0 208.0 C656.0 207.8 678.3 212.2 686.0 213.0" stroke-width="4.0" opacity="0.7"/>
<path d="M500.0 228.0 C507.5 228.7 528.3 231.7 545.0 232.0 C561.7 232.3 582.5 231.0 600.0 230.0 C617.5 229.0 636.7 225.7 650.0 226.0 C663.3 226.3 675.0 231.0 680.0 232.0" stroke-width="3.0" opacity="0.6"/>
<path d="M636.0 323.0 C636.8 325.8 639.2 333.8 641.0 340.0 C642.8 346.2 645.8 356.7 646.7 360.0" stroke-width="2.2"/>
<path d="M625.0 240.0 C629.2 242.5 642.8 246.7 650.0 255.0 C657.2 263.3 665.0 284.2 668.0 290.0" stroke-width="3.0" opacity="0.7"/>
<path d="M605.0 270.0 C609.2 269.2 621.7 268.7 630.0 265.0 C638.3 261.3 648.0 253.0 655.0 248.0 C662.0 243.0 669.2 237.2 672.0 235.0" stroke-width="3.0" opacity="0.6"/>
<path d="M600.0 300.0 C604.2 297.5 616.7 290.8 625.0 285.0 C633.3 279.2 643.3 271.2 650.0 265.0 C656.7 258.8 662.5 250.8 665.0 248.0" stroke-width="3.0" opacity="0.6"/>
<path d="M595.0 320.0 C599.2 317.5 612.5 310.0 620.0 305.0 C627.5 300.0 636.7 292.5 640.0 290.0" stroke-width="3.0" opacity="0.5"/>
<path d="M446.0 215.0 C446.3 220.8 446.0 238.3 448.0 250.0 C450.0 261.7 453.0 275.0 458.0 285.0 C463.0 295.0 470.2 302.5 478.0 310.0 C485.8 317.5 495.5 324.7 505.0 330.0 C514.5 335.3 530.0 340.0 535.0 342.0" stroke-width="2.6" opacity="0.8"/>
<path d="M470.0 120.0 C468.0 125.0 461.0 138.3 458.0 150.0 C455.0 161.7 453.0 183.3 452.0 190.0" stroke-width="2.6" opacity="0.8"/>
<path d="M612.0 92.0 C613.7 100.0 619.0 122.0 622.0 140.0 C625.0 158.0 628.7 190.0 630.0 200.0" stroke-width="1.4" opacity="0.6"/>
<path d="M545.0 255.0 C545.8 259.2 547.5 272.5 550.0 280.0 C552.5 287.5 558.3 296.7 560.0 300.0" stroke-width="1.6" opacity="0.6"/>
<path d="M530.0 92.0 C529.0 101.7 525.7 130.3 524.0 150.0 C522.3 169.7 521.0 191.7 520.0 210.0 C519.0 228.3 518.3 251.7 518.0 260.0" stroke-width="1.4" opacity="0.6"/>
<path d="M650.0 110.0 C653.0 116.7 663.7 135.0 668.0 150.0 C672.3 165.0 674.0 185.0 676.0 200.0 C678.0 215.0 679.3 233.3 680.0 240.0" stroke-width="2.2" opacity="0.7"/>
<path d="M660.0 105.0 C663.3 110.8 675.0 125.8 680.0 140.0 C685.0 154.2 688.0 175.0 690.0 190.0 C692.0 205.0 692.8 216.7 692.0 230.0 C691.2 243.3 686.2 263.3 685.0 270.0" stroke-width="2.0" opacity="0.6"/>
<path d="M455.0 180.0 C456.2 188.3 458.2 214.2 462.0 230.0 C465.8 245.8 471.7 262.5 478.0 275.0 C484.3 287.5 491.3 296.7 500.0 305.0 C508.7 313.3 525.0 321.7 530.0 325.0" stroke-width="2.0" opacity="0.7"/>
<path d="M500.0 300.0 C505.0 303.3 520.0 315.0 530.0 320.0 C540.0 325.0 550.0 327.0 560.0 330.0 C570.0 333.0 580.0 338.0 590.0 338.0 C600.0 338.0 610.0 334.3 620.0 330.0 C630.0 325.7 645.0 315.0 650.0 312.0" stroke-width="2.2" opacity="0.6"/>
 </g>
 <g fill="none" stroke="#9ed2f2" stroke-linecap="round" opacity="0.85" filter="url(#soft)">
<path d="M598.7 81.5 C598.6 92.9 598.3 121.9 598.0 150.0 C597.7 178.1 597.3 216.6 597.0 250.0 C596.7 283.4 596.2 333.8 596.0 350.5" stroke-width="1.8"/>
<path d="M601.5 85.0 C601.4 97.5 601.2 130.8 601.0 160.0 C600.8 189.2 600.2 243.3 600.0 260.0" stroke-width="1.0" opacity="0.7"/>
<path d="M557.0 74.0 C565.8 73.8 594.5 71.3 610.0 73.0 C625.5 74.7 636.8 76.2 650.0 84.0 C663.2 91.8 679.0 107.2 689.0 119.5 C699.0 131.8 705.5 146.0 709.7 158.0 C713.9 170.0 714.0 182.6 714.3 191.7 C714.6 200.8 712.1 209.0 711.7 212.5" stroke-width="1.8"/>
<path d="M620.0 78.0 C626.7 80.3 647.8 84.2 660.0 92.0 C672.2 99.8 684.2 112.0 693.0 125.0 C701.8 138.0 709.7 162.5 713.0 170.0" stroke-width="1.2" opacity="0.7"/>
<path d="M491.0 150.0 C491.3 158.3 492.1 186.2 493.0 200.0 C493.9 213.8 494.0 221.3 496.5 233.0 C499.0 244.7 503.8 260.2 508.0 270.0 C512.2 279.8 516.2 285.0 522.0 291.7 C527.8 298.4 535.3 305.5 543.0 310.4 C550.7 315.2 560.2 317.7 568.0 320.8 C575.8 323.9 586.3 327.6 590.0 329.0" stroke-width="2.0"/>
<path d="M711.7 212.5 C713.4 213.2 720.0 213.3 722.0 216.7 C724.0 220.1 724.7 227.4 724.0 233.0 C723.3 238.6 721.5 245.1 718.0 250.0 C714.5 254.9 705.5 260.4 703.0 262.5" stroke-width="1.8"/>
<path d="M688.0 260.4 C685.0 265.3 677.6 278.6 670.0 290.0 C662.4 301.4 646.0 317.3 642.5 329.0 C639.0 340.7 647.7 354.8 648.8 360.0" stroke-width="1.6"/>
<path d="M628.0 187.5 C631.7 187.1 643.3 184.0 650.0 185.0 C656.7 186.0 665.0 192.3 668.0 193.8" stroke-width="1.8"/>
<ellipse cx="641" cy="205" rx="30" ry="17" stroke-width="2"/>
<circle cx="654" cy="214" r="12" stroke-width="1.4" opacity="0.7"/>
<path d="M522.5 200.0 C527.0 197.8 541.3 187.5 549.6 186.5 C557.9 185.5 568.7 192.5 572.5 193.8" stroke-width="1.8"/>
<ellipse cx="549" cy="205" rx="22" ry="16" stroke-width="2"/>
<circle cx="543.3" cy="216.7" r="10" stroke-width="1.4" opacity="0.7"/>
<path d="M592.5 289.6 C594.6 289.6 602.9 289.6 605.0 289.6" stroke-width="2.2"/>
<path d="M496.0 140.0 C495.7 146.7 493.7 163.3 494.0 180.0 C494.3 196.7 495.3 223.3 498.0 240.0 C500.7 256.7 504.7 269.5 510.0 280.0 C515.3 290.5 526.7 299.2 530.0 303.0" stroke-width="1.3" opacity="0.6"/>
<path d="M600.0 76.0 C606.7 76.7 627.5 76.0 640.0 80.0 C652.5 84.0 665.0 91.7 675.0 100.0 C685.0 108.3 693.2 118.3 700.0 130.0 C706.8 141.7 712.7 158.3 716.0 170.0 C719.3 181.7 719.3 195.0 720.0 200.0" stroke-width="1.3" opacity="0.6"/>
 </g>
 <g fill="none" stroke="#1c1c20" stroke-linecap="round" filter="url(#soft2)">
<path d="M474.6 202.0 C474.6 200.3 474.4 196.9 474.6 191.7 C474.8 186.5 474.1 178.4 475.6 170.8 C477.1 163.2 478.2 156.4 483.4 146.0 C488.6 135.6 499.1 117.7 506.9 108.6 C514.7 99.5 522.5 95.7 530.3 91.4 C538.1 87.1 547.2 84.8 553.8 82.8 C560.3 80.8 562.9 80.2 569.4 79.7 C575.9 79.2 585.0 78.8 592.8 79.7 C600.6 80.6 607.7 81.8 616.0 85.0 C624.3 88.2 635.5 94.8 642.5 99.0 C649.5 103.2 652.8 104.8 658.0 110.0 C663.2 115.2 669.1 122.5 673.8 130.5 C678.4 138.5 683.2 149.6 686.0 158.0 C688.8 166.4 689.5 173.7 690.8 181.0 C692.1 188.3 693.6 195.0 694.0 202.0 C694.4 209.0 693.2 219.5 693.0 223.0" stroke-width="1.7"/>
<path d="M478.0 180.0 C479.2 175.0 480.0 161.3 485.0 150.0 C490.0 138.7 500.2 121.3 508.0 112.0 C515.8 102.7 524.0 98.5 532.0 94.0 C540.0 89.5 548.0 87.1 556.0 85.0 C564.0 82.9 571.0 81.7 580.0 81.5 C589.0 81.3 605.0 83.6 610.0 84.0" stroke-width="1.0" opacity="0.55"/>
<path d="M600.0 82.0 C605.0 83.3 620.8 86.0 630.0 90.0 C639.2 94.0 648.0 100.2 655.0 106.0 C662.0 111.8 667.2 117.7 672.0 125.0 C676.8 132.3 682.0 145.8 684.0 150.0" stroke-width="1.0" opacity="0.5"/>
<path d="M474.6 202.0 C475.0 205.5 475.0 215.0 476.7 223.0 C478.4 231.0 482.2 243.4 484.6 250.0 C487.0 256.6 488.1 257.3 490.8 262.5 C493.5 267.7 496.8 275.4 501.0 281.0 C505.2 286.6 510.8 290.8 516.0 296.0 C521.2 301.2 527.0 307.7 532.5 312.5 C538.0 317.3 543.8 321.9 549.0 325.0 C554.2 328.1 558.9 329.7 563.8 331.0 C568.6 332.3 573.6 332.8 578.0 333.0 C582.4 333.2 586.9 333.0 590.0 332.5 C593.1 332.0 592.1 331.6 596.7 330.0 C601.3 328.4 610.6 325.9 617.5 323.0 C624.4 320.1 631.8 317.0 638.0 312.5 C644.2 308.0 650.1 301.2 655.0 296.0 C659.9 290.8 663.7 286.9 667.5 281.0 C671.3 275.1 675.2 265.6 678.0 260.4 C680.8 255.2 683.0 251.7 684.0 250.0" stroke-width="1.8"/>
<path d="M475.6 191.7 C477.5 198.6 483.8 220.1 487.0 233.3 C490.2 246.5 491.6 261.1 495.0 270.8 C498.4 280.5 502.7 285.1 507.5 291.7 C512.3 298.3 518.1 305.2 524.0 310.4 C529.9 315.6 537.1 319.9 543.0 323.0 C548.9 326.1 553.4 327.3 559.6 329.0 C565.8 330.7 576.6 332.3 580.0 333.0" stroke-width="1.2" opacity="0.8"/>
<path d="M511.7 293.8 C515.2 295.6 524.9 302.2 532.5 305.0 C540.1 307.8 549.6 309.5 557.5 310.4 C565.4 311.3 571.1 310.8 580.0 310.4 C588.9 310.0 601.3 309.4 611.0 308.0 C620.7 306.6 630.7 304.4 638.0 302.0 C645.3 299.6 650.1 297.6 655.0 293.8 C659.9 289.9 665.4 281.5 667.5 279.0" stroke-width="1.6"/>
<path d="M520.0 298.0 C524.2 299.7 535.8 305.7 545.0 308.0 C554.2 310.3 564.0 311.7 575.0 312.0 C586.0 312.3 600.2 311.2 611.0 310.0 C621.8 308.8 631.8 308.0 640.0 305.0 C648.2 302.0 656.7 294.2 660.0 292.0" stroke-width="1.0" opacity="0.6"/>
<path d="M560.0 84.0 C560.0 95.0 559.7 132.1 560.0 150.0 C560.3 167.9 561.0 177.8 562.0 191.7 C563.0 205.6 564.7 223.6 566.0 233.3 C567.3 243.0 568.3 243.1 570.0 250.0 C571.7 256.9 573.9 265.3 576.0 275.0 C578.1 284.7 580.7 298.7 582.5 308.0 C584.3 317.3 586.0 327.2 586.7 331.0" stroke-width="1.4" opacity="0.85"/>
<path d="M572.0 275.0 C572.8 278.3 575.3 288.3 577.0 295.0 C578.7 301.7 580.5 308.8 582.0 315.0 C583.5 321.2 585.3 329.2 586.0 332.0" stroke-width="2.0" opacity="0.8"/>
<path d="M568.0 264.6 C568.7 265.3 570.7 267.6 572.0 269.0 C573.3 270.4 575.3 272.3 576.0 273.0" stroke-width="2.4"/>
<path d="M574.0 297.0 C575.9 297.0 583.7 297.0 585.6 297.0" stroke-width="2.2"/>
<path d="M557.5 329.0 C557.9 332.2 559.1 341.7 559.6 348.0 C560.1 354.3 560.4 363.6 560.6 366.7" stroke-width="3.2"/>
<path d="M644.6 310.4 C645.3 313.7 647.6 323.1 649.0 330.0 C650.4 336.9 652.3 348.3 653.0 352.0" stroke-width="3.4"/>
<path d="M677.0 216.7 C678.3 213.8 681.6 201.8 684.6 199.0 C687.6 196.2 691.9 197.1 695.0 200.0 C698.1 202.9 701.7 211.1 703.3 216.7 C704.9 222.2 705.1 227.8 704.4 233.3 C703.7 238.9 701.6 245.8 699.0 250.0 C696.4 254.2 692.0 256.6 688.8 258.3 C685.5 260.0 681.0 260.0 679.4 260.4" stroke-width="2.8"/>
<path d="M682.0 210.0 C683.3 208.7 687.3 202.7 690.0 202.0 C692.7 201.3 696.2 202.2 698.0 206.0 C699.8 209.8 701.2 218.5 701.0 225.0 C700.8 231.5 699.5 239.8 697.0 245.0 C694.5 250.2 687.8 254.2 686.0 256.0" stroke-width="1.2" opacity="0.7"/>
<path d="M486.0 236.0 C485.2 237.8 481.3 243.0 481.0 247.0 C480.7 251.0 482.2 255.8 484.0 260.0 C485.8 264.2 490.7 270.0 492.0 272.0" stroke-width="1.4" opacity="0.8"/>
<path d="M475.0 192.0 C475.8 195.8 478.0 207.0 480.0 215.0 C482.0 223.0 484.7 232.2 487.0 240.0 C489.3 247.8 491.2 255.0 494.0 262.0 C496.8 269.0 499.7 275.7 504.0 282.0 C508.3 288.3 517.3 297.0 520.0 300.0" stroke-width="1.2" opacity="0.7"/>
<path d="M489.0 233.3 C488.0 235.0 483.3 239.6 483.0 243.8 C482.7 247.9 485.1 253.9 487.0 258.3 C488.9 262.7 493.2 268.1 494.4 270.0" stroke-width="3.4"/>
<path d="M486.0 236.0 C486.7 238.3 488.3 245.7 490.0 250.0 C491.7 254.3 494.3 258.0 496.0 262.0 C497.7 266.0 499.3 272.0 500.0 274.0" stroke-width="2.0" opacity="0.8"/>
<path d="M508.0 216.7 C510.4 215.0 518.0 208.1 522.5 206.2 C527.0 204.4 530.7 204.8 535.0 205.8 C539.3 206.8 546.2 211.4 548.5 212.5" stroke-width="2.4"/>
<path d="M540.0 209.0 C541.4 209.6 547.1 211.9 548.5 212.5" stroke-width="2.8"/>
<path d="M513.0 235.4 C514.6 234.0 518.8 228.7 522.5 227.0 C526.2 225.3 530.8 225.2 535.0 225.0 C539.2 224.8 545.4 225.8 547.5 226.0" stroke-width="1.8"/>
<path d="M536.3 228.1 A7.3 7.3 0 1 1 530.1 228.7" stroke-width="1.9"/>
<path d="M602.3 213.4 C603.6 212.0 607.3 207.2 610.0 205.0 C612.7 202.8 615.0 201.2 618.8 200.0 C622.5 198.8 628.4 197.8 632.8 197.8 C637.2 197.8 641.5 198.7 645.0 200.0 C648.5 201.3 652.5 204.7 654.0 205.6" stroke-width="2.8"/>
<path d="M601.6 223.6 C603.0 222.7 607.1 219.4 610.0 218.0 C612.9 216.6 614.4 215.1 618.8 215.0 C623.1 214.9 631.6 215.6 636.0 217.3 C640.4 219.0 643.8 223.7 645.3 225.0" stroke-width="2.0"/>
<path d="M626.4 221.6 A7.6 7.6 0 1 1 614.8 221.6" stroke-width="1.9"/>
<path d="M631.0 232.0 C632.2 231.6 635.7 230.7 638.0 229.5 C640.3 228.3 643.8 225.8 645.0 225.0" stroke-width="1.6"/>
<path d="M476.0 200.0 C476.2 195.8 475.5 183.7 477.0 175.0 C478.5 166.3 479.8 158.7 485.0 148.0 C490.2 137.3 500.3 120.0 508.0 111.0 C515.7 102.0 523.2 98.2 531.0 94.0 C538.8 89.8 548.5 87.4 555.0 85.5 C561.5 83.6 563.7 83.1 570.0 82.5 C576.3 81.9 585.2 81.2 593.0 82.0 C600.8 82.8 608.7 84.3 617.0 87.5 C625.3 90.7 636.0 96.8 643.0 101.0 C650.0 105.2 653.7 107.2 659.0 112.5 C664.3 117.8 670.2 125.1 675.0 133.0 C679.8 140.9 684.7 151.7 687.5 160.0 C690.3 168.3 690.7 175.7 692.0 183.0 C693.3 190.3 694.9 200.5 695.5 204.0" stroke-width="1.0" opacity="0.6"/>
<path d="M476.0 215.0 C476.8 218.8 479.0 231.3 481.0 238.0 C483.0 244.7 485.0 248.8 488.0 255.0 C491.0 261.2 494.7 268.8 499.0 275.0 C503.3 281.2 508.7 286.3 514.0 292.0 C519.3 297.7 525.3 304.0 531.0 309.0 C536.7 314.0 542.7 318.7 548.0 322.0 C553.3 325.3 557.8 327.5 563.0 329.0 C568.2 330.5 576.3 330.7 579.0 331.0" stroke-width="1.0" opacity="0.6"/>
<path d="M596.0 329.0 C599.5 327.7 610.2 324.2 617.0 321.0 C623.8 317.8 630.8 314.5 637.0 310.0 C643.2 305.5 649.2 299.2 654.0 294.0 C658.8 288.8 662.3 284.8 666.0 279.0 C669.7 273.2 673.2 264.3 676.0 259.0 C678.8 253.7 681.8 249.0 683.0 247.0" stroke-width="1.0" opacity="0.6"/>
<path d="M559.0 331.0 C559.3 334.2 560.4 344.0 561.0 350.0 C561.6 356.0 562.2 364.2 562.5 367.0" stroke-width="1.4" opacity="0.7"/>
<path d="M647.0 312.0 C647.7 315.3 649.7 325.3 651.0 332.0 C652.3 338.7 654.3 348.7 655.0 352.0" stroke-width="1.4" opacity="0.7"/>
 </g>
 <circle cx="353" cy="350.5" r="6.3" fill="none" stroke="#111" stroke-width="1"/>
</svg><!--/SK-->

<!-- TIMELINE -->
<div class="a" style="left:0;top:372px;width:797px;height:174px;background:#26282b"></div>
<div class="a" style="left:2px;top:372px;width:793px;height:1px;background:#3e4144"></div>
<div class="a" style="left:2px;top:372px;width:1px;height:173px;background:#3e4144"></div>
<div class="a" style="left:794.5px;top:372.5px;width:1px;height:173px;background:#3a3b3e"></div>
<div class="a" style="left:3px;top:373px;width:791px;height:24px;background:#26282b"></div>
<div class="t" style="left:4.4px;top:380px;font-size:9.3px;color:#d8d8d8">Animation Timeline</div>
<div class="a" style="left:3px;top:397px;width:791px;height:1px;background:#3a3c3f"></div>
<div class="a" style="left:3px;top:398px;width:109px;height:21px;background:#2b2d31"></div>
<div class="a" style="left:112px;top:398px;width:682px;height:133px;background:#1f2629"></div>
<div class="a" style="left:112px;top:531px;width:682px;height:14.5px;background:#1b1e22"></div>
<div class="a" style="left:3px;top:531px;width:109px;height:14.5px;background:#2a2c2f"></div>
<div class="a" style="left:3px;top:531px;width:109px;height:1px;background:#3e4043"></div>

<div class="a" style="left:129.5px;top:419px;width:1px;height:112px;background:#1f2629"></div>
<div class="a" style="left:147.5px;top:419px;width:1px;height:112px;background:#1f2629"></div>
<div class="a" style="left:165.5px;top:419px;width:1px;height:112px;background:#1f2629"></div>
<div class="a" style="left:183.5px;top:419px;width:1px;height:112px;background:#1f2629"></div>
<div class="a" style="left:201.5px;top:419px;width:1px;height:112px;background:#1f2629"></div>
<div class="a" style="left:219.5px;top:419px;width:1px;height:112px;background:#1f2629"></div>
<div class="a" style="left:237.5px;top:419px;width:1px;height:112px;background:#1f2629"></div>
<div class="a" style="left:255.5px;top:419px;width:1px;height:112px;background:#1f2629"></div>
<div class="a" style="left:273.5px;top:419px;width:1px;height:112px;background:#1f2629"></div>
<div class="a" style="left:291.5px;top:419px;width:1px;height:112px;background:#1f2629"></div>
<div class="a" style="left:309.5px;top:419px;width:1px;height:112px;background:#1f2629"></div>
<div class="a" style="left:327.5px;top:419px;width:1px;height:112px;background:#1f2629"></div>
<div class="a" style="left:345.5px;top:419px;width:1px;height:112px;background:#1f2629"></div>
<div class="a" style="left:363.5px;top:419px;width:1px;height:112px;background:#1f2629"></div>
<div class="a" style="left:381.5px;top:419px;width:1px;height:112px;background:#1f2629"></div>
<div class="a" style="left:399.5px;top:419px;width:1px;height:112px;background:#1f2629"></div>
<div class="a" style="left:417.5px;top:419px;width:1px;height:112px;background:#1f2629"></div>
<div class="a" style="left:435.5px;top:419px;width:1px;height:112px;background:#1f2629"></div>
<div class="a" style="left:453.5px;top:419px;width:1px;height:112px;background:#1f2629"></div>
<div class="a" style="left:471.5px;top:419px;width:1px;height:112px;background:#1f2629"></div>
<div class="a" style="left:489.5px;top:419px;width:1px;height:112px;background:#1f2629"></div>
<div class="a" style="left:507.5px;top:419px;width:1px;height:112px;background:#1f2629"></div>
<div class="a" style="left:525.5px;top:419px;width:1px;height:112px;background:#1f2629"></div>
<div class="a" style="left:543.5px;top:419px;width:1px;height:112px;background:#1f2629"></div>
<div class="a" style="left:561.5px;top:419px;width:1px;height:112px;background:#1f2629"></div>
<div class="a" style="left:579.5px;top:419px;width:1px;height:112px;background:#1f2629"></div>
<div class="a" style="left:597.5px;top:419px;width:1px;height:112px;background:#1f2629"></div>
<div class="a" style="left:615.5px;top:419px;width:1px;height:112px;background:#1f2629"></div>
<div class="a" style="left:633.5px;top:419px;width:1px;height:112px;background:#1f2629"></div>
<div class="a" style="left:651.5px;top:419px;width:1px;height:112px;background:#1f2629"></div>
<div class="a" style="left:669.5px;top:419px;width:1px;height:112px;background:#1f2629"></div>
<div class="a" style="left:687.5px;top:419px;width:1px;height:112px;background:#1f2629"></div>
<div class="a" style="left:705.5px;top:419px;width:1px;height:112px;background:#1f2629"></div>
<div class="a" style="left:723.5px;top:419px;width:1px;height:112px;background:#1f2629"></div>
<div class="a" style="left:741.5px;top:419px;width:1px;height:112px;background:#1f2629"></div>
<div class="a" style="left:759.5px;top:419px;width:1px;height:112px;background:#1f2629"></div>
<div class="a" style="left:777.5px;top:419px;width:1px;height:112px;background:#1f2629"></div>
<div class="a" style="left:795.5px;top:419px;width:1px;height:112px;background:#1f2629"></div>
<div class="a" style="left:112px;top:398px;width:682px;height:21px;background:#2a2d32"></div>
<div class="a" style="left:112px;top:411px;width:17px;height:7.5px;background:#646c73"></div>
<div class="t" style="left:114px;top:400px;font-size:8.8px;color:#e0e0e0">0</div>
<div class="a" style="left:130px;top:411px;width:17px;height:7.5px;background:#646c73"></div>
<div class="a" style="left:148px;top:411px;width:17px;height:7.5px;background:#646c73"></div>
<div class="t" style="left:150px;top:400px;font-size:8.8px;color:#e0e0e0">2</div>
<div class="a" style="left:166px;top:411px;width:17px;height:7.5px;background:#646c73"></div>
<div class="a" style="left:184px;top:411px;width:17px;height:7.5px;background:#e8a33c"></div>
<div class="t" style="left:186px;top:400px;font-size:8.8px;color:#e0e0e0">4</div>
<div class="a" style="left:202px;top:411px;width:17px;height:7.5px;background:#646c73"></div>
<div class="a" style="left:220px;top:411px;width:17px;height:7.5px;background:#646c73"></div>
<div class="t" style="left:222px;top:400px;font-size:8.8px;color:#e0e0e0">6</div>
<div class="a" style="left:238px;top:411px;width:17px;height:7.5px;background:#646c73"></div>
<div class="a" style="left:256px;top:411px;width:17px;height:7.5px;background:#646c73"></div>
<div class="t" style="left:258px;top:400px;font-size:8.8px;color:#e0e0e0">8</div>
<div class="a" style="left:274px;top:411px;width:17px;height:7.5px;background:#646c73"></div>
<div class="a" style="left:292px;top:411px;width:17px;height:7.5px;background:#646c73"></div>
<div class="t" style="left:294px;top:400px;font-size:8.8px;color:#e0e0e0">10</div>
<div class="a" style="left:310px;top:411px;width:17px;height:7.5px;background:#646c73"></div>
<div class="a" style="left:328px;top:411px;width:17px;height:7.5px;background:#646c73"></div>
<div class="t" style="left:330px;top:400px;font-size:8.8px;color:#e0e0e0">12</div>
<div class="a" style="left:346px;top:411px;width:17px;height:7.5px;background:#646c73"></div>
<div class="a" style="left:364px;top:411px;width:17px;height:7.5px;background:#646c73"></div>
<div class="t" style="left:366px;top:400px;font-size:8.8px;color:#e0e0e0">14</div>
<div class="a" style="left:382px;top:411px;width:17px;height:7.5px;background:#646c73"></div>
<div class="a" style="left:400px;top:411px;width:17px;height:7.5px;background:#646c73"></div>
<div class="t" style="left:402px;top:400px;font-size:8.8px;color:#e0e0e0">16</div>
<div class="a" style="left:418px;top:411px;width:17px;height:7.5px;background:#646c73"></div>
<div class="a" style="left:436px;top:411px;width:17px;height:7.5px;background:#646c73"></div>
<div class="t" style="left:438px;top:400px;font-size:8.8px;color:#e0e0e0">18</div>
<div class="a" style="left:454px;top:411px;width:17px;height:7.5px;background:#646c73"></div>
<div class="a" style="left:472px;top:411px;width:17px;height:7.5px;background:#646c73"></div>
<div class="t" style="left:474px;top:400px;font-size:8.8px;color:#e0e0e0">20</div>
<div class="a" style="left:490px;top:411px;width:17px;height:7.5px;background:#646c73"></div>
<div class="a" style="left:508px;top:411px;width:17px;height:7.5px;background:#646c73"></div>
<div class="t" style="left:510px;top:400px;font-size:8.8px;color:#e0e0e0">22</div>
<div class="a" style="left:526px;top:411px;width:17px;height:7.5px;background:#646c73"></div>
<div class="a" style="left:544px;top:411px;width:17px;height:7.5px;background:#646c73"></div>
<div class="t" style="left:546px;top:400px;font-size:8.8px;color:#e0e0e0">24</div>
<div class="a" style="left:562px;top:411px;width:17px;height:7.5px;background:#646c73"></div>
<div class="a" style="left:580px;top:411px;width:17px;height:7.5px;background:#646c73"></div>
<div class="t" style="left:582px;top:400px;font-size:8.8px;color:#e0e0e0">26</div>
<div class="a" style="left:598px;top:411px;width:17px;height:7.5px;background:#646c73"></div>
<div class="a" style="left:616px;top:411px;width:17px;height:7.5px;background:#646c73"></div>
<div class="t" style="left:618px;top:400px;font-size:8.8px;color:#e0e0e0">28</div>
<div class="a" style="left:634px;top:411px;width:17px;height:7.5px;background:#646c73"></div>
<div class="a" style="left:652px;top:411px;width:17px;height:7.5px;background:#646c73"></div>
<div class="t" style="left:654px;top:400px;font-size:8.8px;color:#e0e0e0">30</div>
<div class="a" style="left:670px;top:411px;width:17px;height:7.5px;background:#646c73"></div>
<div class="a" style="left:688px;top:411px;width:17px;height:7.5px;background:#646c73"></div>
<div class="t" style="left:690px;top:400px;font-size:8.8px;color:#e0e0e0">32</div>
<div class="a" style="left:706px;top:411px;width:17px;height:7.5px;background:#646c73"></div>
<div class="a" style="left:724px;top:411px;width:17px;height:7.5px;background:#646c73"></div>
<div class="t" style="left:726px;top:400px;font-size:8.8px;color:#e0e0e0">34</div>
<div class="a" style="left:742px;top:411px;width:17px;height:7.5px;background:#646c73"></div>
<div class="a" style="left:760px;top:411px;width:17px;height:7.5px;background:#646c73"></div>
<div class="t" style="left:762px;top:400px;font-size:8.8px;color:#e0e0e0">36</div>
<div class="a" style="left:778px;top:411px;width:16px;height:7.5px;background:#646c73"></div>
<div class="a" style="left:3px;top:419px;width:109px;height:22px;background:#7a2b33"></div>
<div class="t" style="left:22.5px;top:426.70px;font-size:9.5px;color:#e8c8c8">F</div>
<div class="a" style="left:3px;top:441px;width:109px;height:22.5px;background:#5c4470"></div>
<div class="t" style="left:22.5px;top:448.95px;font-size:9.5px;color:#e0d0ec">S/H</div>
<div class="a" style="left:3px;top:463.5px;width:109px;height:22.0px;background:#6f5430"></div>
<div class="t" style="left:22.5px;top:471.20px;font-size:9.5px;color:#ecdcc0">O</div>
<div class="a" style="left:3px;top:485.5px;width:109px;height:24.0px;background:#5fa3b3"></div>
<div class="a" style="left:3px;top:487.5px;width:109px;height:20px;background:#6b6536"></div>
<div class="a" style="left:112px;top:486.5px;width:682px;height:22px;background:#1f3f52"></div>
<div class="a" style="left:220px;top:497px;width:574px;height:1px;background:#3b8bb8"></div>
<div class="t" style="left:22.5px;top:494.20px;font-size:9.5px;color:#e8e4c0">R</div>
<div class="a" style="left:3px;top:509.5px;width:109px;height:21.5px;background:#3d3f42"></div>
<div class="t" style="left:22.5px;top:516.95px;font-size:9.5px;color:#e0e0e0">B</div>
<div class="a" style="left:3px;top:441px;width:109px;height:1px;background:#8a5a80;opacity:0.5"></div>
<div class="a" style="left:112px;top:486.5px;width:17px;height:22px;background:#3daee9"></div>
<div class="a" style="left:130px;top:486.5px;width:17px;height:22px;background:#3daee9"></div>
<div class="a" style="left:148px;top:486.5px;width:17px;height:22px;background:#3daee9"></div>
<div class="a" style="left:166px;top:486.5px;width:17px;height:22px;background:#3daee9"></div>
<div class="a" style="left:184px;top:486.5px;width:18px;height:22px;background:repeating-linear-gradient(135deg,#8a9670 0 2px,#a8b49a 2px 4px)"></div>
<div class="a" style="left:202px;top:486.5px;width:17px;height:22px;background:#3daee9"></div>
<div class="a" style="left:237.5px;top:486.5px;width:0.8px;height:22px;background:#1a3343"></div>
<div class="a" style="left:255.5px;top:486.5px;width:0.8px;height:22px;background:#1a3343"></div>
<div class="a" style="left:273.5px;top:486.5px;width:0.8px;height:22px;background:#1a3343"></div>
<div class="a" style="left:291.5px;top:486.5px;width:0.8px;height:22px;background:#1a3343"></div>
<div class="a" style="left:309.5px;top:486.5px;width:0.8px;height:22px;background:#1a3343"></div>
<div class="a" style="left:327.5px;top:486.5px;width:0.8px;height:22px;background:#1a3343"></div>
<div class="a" style="left:345.5px;top:486.5px;width:0.8px;height:22px;background:#1a3343"></div>
<div class="a" style="left:363.5px;top:486.5px;width:0.8px;height:22px;background:#1a3343"></div>
<div class="a" style="left:381.5px;top:486.5px;width:0.8px;height:22px;background:#1a3343"></div>
<div class="a" style="left:399.5px;top:486.5px;width:0.8px;height:22px;background:#1a3343"></div>
<div class="a" style="left:417.5px;top:486.5px;width:0.8px;height:22px;background:#1a3343"></div>
<div class="a" style="left:435.5px;top:486.5px;width:0.8px;height:22px;background:#1a3343"></div>
<div class="a" style="left:453.5px;top:486.5px;width:0.8px;height:22px;background:#1a3343"></div>
<div class="a" style="left:471.5px;top:486.5px;width:0.8px;height:22px;background:#1a3343"></div>
<div class="a" style="left:489.5px;top:486.5px;width:0.8px;height:22px;background:#1a3343"></div>
<div class="a" style="left:507.5px;top:486.5px;width:0.8px;height:22px;background:#1a3343"></div>
<div class="a" style="left:525.5px;top:486.5px;width:0.8px;height:22px;background:#1a3343"></div>
<div class="a" style="left:543.5px;top:486.5px;width:0.8px;height:22px;background:#1a3343"></div>
<div class="a" style="left:561.5px;top:486.5px;width:0.8px;height:22px;background:#1a3343"></div>
<div class="a" style="left:579.5px;top:486.5px;width:0.8px;height:22px;background:#1a3343"></div>
<div class="a" style="left:597.5px;top:486.5px;width:0.8px;height:22px;background:#1a3343"></div>
<div class="a" style="left:615.5px;top:486.5px;width:0.8px;height:22px;background:#1a3343"></div>
<div class="a" style="left:633.5px;top:486.5px;width:0.8px;height:22px;background:#1a3343"></div>
<div class="a" style="left:651.5px;top:486.5px;width:0.8px;height:22px;background:#1a3343"></div>
<div class="a" style="left:669.5px;top:486.5px;width:0.8px;height:22px;background:#1a3343"></div>
<div class="a" style="left:687.5px;top:486.5px;width:0.8px;height:22px;background:#1a3343"></div>
<div class="a" style="left:705.5px;top:486.5px;width:0.8px;height:22px;background:#1a3343"></div>
<div class="a" style="left:723.5px;top:486.5px;width:0.8px;height:22px;background:#1a3343"></div>
<div class="a" style="left:741.5px;top:486.5px;width:0.8px;height:22px;background:#1a3343"></div>
<div class="a" style="left:759.5px;top:486.5px;width:0.8px;height:22px;background:#1a3343"></div>
<div class="a" style="left:777.5px;top:486.5px;width:0.8px;height:22px;background:#1a3343"></div>
<div class="a" style="left:795.5px;top:486.5px;width:0.8px;height:22px;background:#1a3343"></div>
<div class="a" style="left:184px;top:418.5px;width:4.5px;height:112.5px;background:#e5a23e"></div>
<div class="a" style="left:197.5px;top:418.5px;width:4.5px;height:112.5px;background:#e5a23e"></div>
<div class="a" style="left:184px;top:441px;width:18px;height:1px;background:#1f2629"></div>
<div class="a" style="left:184px;top:463.5px;width:18px;height:1px;background:#1f2629"></div>
<div class="a" style="left:184px;top:508.5px;width:18px;height:1px;background:#1f2629"></div>
<div class="a" style="left:188.5px;top:486.5px;width:9px;height:22px;background:repeating-linear-gradient(135deg,#8a9670 0 2px,#aab59c 2px 4px)"></div>
<div class="a" style="left:191.5px;top:495.5px;width:3px;height:3px;background:#e5a23e"></div>

<div class="a" style="left:54px;top:543.5px;width:34px;height:2px;background:#4a4b4e"></div>
<svg style="left:0;top:0" width="800" height="546">
<defs><symbol id="pin" viewBox="0 0 11 11" overflow="visible"><path d="M6.4 0.4 L10.6 4.2 L6.2 8.2 L2.6 5.2 Z" fill="currentColor"/><path d="M1 5.2 L5.6 9.8" stroke="currentColor" stroke-width="1.6"/><path d="M3.2 7.9 L0 11" stroke="currentColor" stroke-width="1.1"/></symbol><symbol id="eye" viewBox="0 0 12 10.5"><path d="M0.2 5.2 C1.8 -0.6 10.2 -0.6 11.8 5.2 C10.2 2.6 1.8 2.6 0.2 5.2 Z" fill="currentColor"/><circle cx="6" cy="3.6" r="2.7" fill="currentColor"/><path d="M1.6 7.3 C3.3 11 8.7 11 10.4 7.3 C8.5 9.3 3.5 9.3 1.6 7.3 Z" fill="currentColor" stroke="currentColor" stroke-width="0.6"/></symbol><symbol id="lockopen" viewBox="0 0 10 11"><rect x="0.5" y="5" width="8.5" height="5.5" fill="currentColor"/><path d="M5.5 5 V2.5 C5.5 0.5 8.5 0.5 8.5 2.5" stroke="currentColor" stroke-width="1.3" fill="none"/></symbol><symbol id="lock" viewBox="0 0 10 11"><rect x="0.5" y="5" width="9" height="6" rx="0.5" fill="currentColor"/><path d="M2.5 5 V3.5 C2.5 0.5 7.5 0.5 7.5 3.5 V5" stroke="currentColor" stroke-width="1.4" fill="none"/></symbol><symbol id="alpha" viewBox="0 0 10 9" overflow="visible"><path d="M9.3 0.8 C8.3 3.5 7.6 6.5 8.8 8.6 M7.8 4.2 C7 0.3 1.8 0 0.8 4.5 C0.2 8 4.8 9.2 7.6 4.6" stroke="currentColor" stroke-width="1.1" fill="none"/></symbol><symbol id="chk3" viewBox="0 0 11 11"><rect x="3.6" y="0" width="3.7" height="3.7" fill="currentColor"/><rect x="0" y="3.6" width="3.7" height="3.7" fill="currentColor"/><rect x="7.3" y="3.6" width="3.7" height="3.7" fill="currentColor"/><rect x="3.6" y="7.3" width="3.7" height="3.7" fill="currentColor"/><rect width="11" height="11" fill="currentColor" opacity="0.45"/></symbol><symbol id="bulb" viewBox="0 0 11 11"><circle cx="5.5" cy="4.5" r="2.8" fill="currentColor"/><rect x="4" y="6.5" width="3" height="3" fill="currentColor"/><g stroke="currentColor" stroke-width="0.8"><path d="M5.5 0 V0.8 M1 4.5 H1.8 M9.2 4.5 H10 M2.3 1.3 L2.9 1.9 M8.7 1.3 L8.1 1.9 M1.5 7.5 L2.2 7 M9.5 7.5 L8.8 7"/></g></symbol></defs>
<use href="#pin" x="8" y="424.5" width="10.5" height="10.5" style="color:#ecd6d8"/>
<use href="#eye" x="59" y="424.5" width="11" height="11" style="color:#ecd6d8"/>
<use href="#lockopen" x="74" y="424.5" width="9.5" height="11" style="color:#b07880"/>
<text x="86.7" y="434.3" font-family="Liberation Serif" font-style="italic" font-size="15px" fill="#b07880">α</text>
<use href="#chk3" x="100" y="424.5" width="11" height="11" style="color:#b07880"/>
<use href="#pin" x="8" y="446.5" width="10.5" height="10.5" style="color:#e8def0"/>
<use href="#eye" x="59" y="446.5" width="11" height="11" style="color:#e8def0"/>
<use href="#lockopen" x="74" y="446.5" width="9.5" height="11" style="color:#9c88b0"/>
<text x="86.7" y="456.3" font-family="Liberation Serif" font-style="italic" font-size="15px" fill="#9c88b0">α</text>
<use href="#chk3" x="100" y="446.5" width="11" height="11" style="color:#9c88b0"/>
<use href="#pin" x="8" y="469.0" width="10.5" height="10.5" style="color:#eee4cc"/>
<use href="#eye" x="59" y="469.0" width="11" height="11" style="color:#eee4cc"/>
<use href="#lockopen" x="74" y="469.0" width="9.5" height="11" style="color:#b0a080"/>
<text x="86.7" y="478.8" font-family="Liberation Serif" font-style="italic" font-size="15px" fill="#b0a080">α</text>
<use href="#chk3" x="100" y="469.0" width="11" height="11" style="color:#b0a080"/>
<use href="#pin" x="8" y="514.5" width="10.5" height="10.5" style="color:#e6e6e6"/>
<use href="#eye" x="59" y="514.5" width="11" height="11" style="color:#e6e6e6"/>
<use href="#lock" x="74" y="514.5" width="9.5" height="11" style="color:#f0f0f0"/>
<text x="86.7" y="524.3" font-family="Liberation Serif" font-style="italic" font-size="15px" fill="#8a8b8d">α</text>
<use href="#chk3" x="100" y="514.5" width="11" height="11" style="color:#8a8b8d"/>
<use href="#pin" x="8" y="492.0" width="10.5" height="10.5" style="color:#ebe6c8"/>
<use href="#eye" x="45" y="492.0" width="11" height="11" style="color:#ebe6c8"/>
<use href="#lockopen" x="60" y="492.0" width="9.5" height="11" style="color:#b0aa80"/>
<text x="72.7" y="501.8" font-family="Liberation Serif" font-style="italic" font-size="15px" fill="#b0aa80">α</text>
<use href="#chk3" x="86" y="492.0" width="11" height="11" style="color:#b0aa80"/>
<use href="#bulb" x="100" y="492.0" width="11" height="11" style="color:#f0eedc"/>

 <path d="M13.6 402 V414 M7.5 408 H19.7" stroke="#e0e0e0" stroke-width="1.6"/>
 <path d="M29 405.5 H31.5 L36 402 V414.5 L31.5 411 H29 Z" fill="#d6d6d6"/>
 <g fill="none" stroke="#d0d0d0" stroke-width="1"><path d="M94 405 V402 H106 V405 M94 411 V414 H106 V411"/></g>
 <path d="M95.5 408 H104.5" stroke="#e0e0e0" stroke-width="1.5"/><path d="M94.5 408 L97.5 405.5 V410.5 Z M105.5 408 L102.5 405.5 V410.5 Z" fill="#e0e0e0"/>
 <!-- transport -->
 <g fill="#d4d4d4">
  <rect x="114.5" y="378" width="1.6" height="12.5"/><path d="M116.5 384.2 L123.5 378 V390.5 Z"/><rect x="124" y="378" width="1.6" height="12.5"/>
  <path d="M144 384.2 L151 378 V390.5 Z"/><rect x="151.5" y="378" width="1.6" height="12.5"/>
  <rect x="170.7" y="379" width="9.3" height="9.5"/>
  <path d="M200 378 L206.8 384.2 L200 390.5 Z"/>
  <rect x="226.8" y="378" width="1.6" height="12.5"/><path d="M228.5 378 L235.4 384.2 L228.5 390.5 Z"/>
  <rect x="252.6" y="378" width="1.6" height="12.5"/><path d="M254.8 378 L262 384.2 L254.8 390.5 Z"/><rect x="262.4" y="378" width="1.6" height="12.5"/>
 </g>
 <g fill="none" stroke="#d4d4d4" stroke-width="1.3">
  <rect x="477.7" y="379.3" width="12.6" height="8.6"/>
  <rect x="505.5" y="378.8" width="11.5" height="6.6"/><path d="M502.8 381.5 V388.5 H514 V385.5"/>
  <rect x="528.6" y="379.3" width="12.6" height="8.6"/>
 </g>
 <path d="M530 389 L540 378.5" stroke="#d4d4d4" stroke-width="1.3"/>
 <!-- onion icon -->
 <path d="M679.5 376.5 C674 381 671.5 385 672.5 388.5 C673.5 391 677 392 679.5 392 C682 392 685.5 391 686.5 388.5 C687.5 385 685 381 679.5 376.5 Z" fill="#d8d8d8"/>
 <path d="M678 378.5 C674.5 383 674.5 388 677 391 M681 378.5 C684.5 383 684.5 388 682 391" stroke="#26282b" stroke-width="1" fill="none"/>
 <g fill="#dcdcdc"><rect x="699" y="377.7" width="14.3" height="1.8"/><rect x="699" y="382.7" width="14.3" height="1.8"/><rect x="699" y="387.6" width="14.3" height="1.8"/></g>
 <g fill="none" stroke="#d0d0d0" stroke-width="1"><rect x="749.2" y="383.5" width="5.5" height="5.5"/><path d="M751.5 383.5 V379.5 H758.8 V386.5 H754.7"/></g>
 <path d="M773.5 380 L781.2 387.8 M781.2 380 L773.5 387.8" stroke="#d8d8d8" stroke-width="1.3"/>

</svg>
<div class="a" style="left:285.6px;top:373.5px;width:55px;height:21px;background:#1b1c1e;border:1px solid #3a3b3e;border-radius:3px"></div>
<div class="t" style="left:307.5px;top:380px;font-size:9.5px;color:#e0e0e0">#&nbsp;&nbsp;4</div>
<div class="a" style="left:355px;top:373.5px;width:23px;height:21px;background:#35373b;border:1px solid #4a4c50;border-radius:3px"></div>
<div class="a" style="left:380.3px;top:373.5px;width:78.5px;height:21px;background:#1b1c1e;border:1px solid #3a3b3e;border-radius:3px"></div>
<div class="a" style="left:380.3px;top:373.5px;width:27.5px;height:21px;background:#3daee9;border-radius:3px 0 0 3px"></div>
<div class="t" style="left:386px;top:380px;font-size:8.8px;color:#e6f0f6">Speed: 100 %</div>
<svg style="left:0;top:0" width="800" height="546">
 <g fill="none" stroke="#d8d8d8" stroke-width="1">
  <path d="M329.5 380 L333 376.5 L336.5 380 M329.5 388 L333 391.5 L336.5 388"/>
  <path d="M446.5 380 L450 376.5 L453.5 380 M446.5 388 L450 391.5 L453.5 388"/>
 </g>
 <rect x="360.5" y="379" width="12" height="9" fill="none" stroke="#d0d0d0" stroke-width="1.2"/>
 <path d="M364.5 381 L369 383.5 L364.5 386 Z" fill="#d8d8d8"/>
 <path d="M359.5 390.5 L362.5 388 M373.5 377 L370.5 379.5" stroke="#d0d0d0" stroke-width="1"/>
</svg>

<!-- LAYERS -->
<div class="a" style="left:795.5px;top:372px;width:228.5px;height:174px;background:#1e1f21"></div>
<div class="a" style="left:798px;top:372.5px;width:223px;height:173px;background:#26282b;border:1px solid #3a3b3e;border-bottom:none"></div>
<svg style="left:0;top:0" width="1024" height="546">
 <circle cx="807.3" cy="380.3" r="5.7" fill="none" stroke="#c8c8c8" stroke-width="1"/>
 <path d="M804.0 383.1 V380.6 H810.5999999999999 V383.1 Z" fill="#d8d8d8"/><path d="M805.3 380.6 V379.7 C805.3 377.3 809.3 377.3 809.3 379.7 V380.6" fill="none" stroke="#d8d8d8" stroke-width="1.1"/>
 <g fill="none" stroke="#d0d0d0" stroke-width="1"><rect x="985.3" y="380" width="5.8" height="5.5"/><path d="M987.8 380 V375.5 H995.5 V383 H991.1"/></g>
 <path d="M1007.3 377.3 L1015 385 M1015 377.3 L1007.3 385" stroke="#d8d8d8" stroke-width="1.3"/>
 <path d="M984.5 399 L988 402.5 L991.5 399" fill="none" stroke="#d8d8d8" stroke-width="1.1"/>
 <path d="M1004.5 394.8 H1015.5 L1011 401 V407.5 L1009 406 V401 Z" fill="none" stroke="#d8d8d8" stroke-width="1.1"/>
 <path d="M985 422 L988.5 418.5 L992 422" fill="none" stroke="#8a8a8a" stroke-width="1"/>
 <path d="M985 428 L988.5 431.5 L992 428" fill="none" stroke="#e0e0e0" stroke-width="1.1"/>
 <g fill="#dcdcdc"><rect x="1005" y="421.8" width="10" height="1.6"/><rect x="1005" y="425.5" width="10" height="1.6"/><rect x="1005" y="429.2" width="10" height="1.6"/></g>
</svg>
<div class="t" style="left:820px;top:375.2px;font-size:9.5px;color:#dcdcdc">Layers</div>
<div class="a" style="left:801px;top:390.3px;width:195.5px;height:22px;background:#313336;border:1px solid #46484c;border-radius:3px"></div>
<div class="t" style="left:805.5px;top:398px;font-size:9.5px;color:#e0e0e0">Normal</div>
<div class="a" style="left:801px;top:415px;width:195.5px;height:21.8px;background:#17181a;border:1px solid #36373a;border-radius:3px"></div>
<div class="a" style="left:801px;top:415px;width:181.5px;height:21.8px;background:#3daee9;border-radius:3px 0 0 3px"></div>
<div class="t" style="left:862.6px;top:421.5px;font-size:9.3px;color:#e4f2fa">Opacity:&nbsp; 100%</div>
<div class="a" style="left:800.5px;top:439.5px;width:220px;height:102px;background:#1f2022;border:1px solid #36373a;border-radius:3px"></div>
<div class="a" style="left:818px;top:440.5px;width:20.5px;height:20.0px;background:#2e2426"></div>
<div class="a" style="left:838.5px;top:440.5px;width:181.5px;height:20.0px;background:#6e2429"></div>
<div class="a" style="left:838.5px;top:440.5px;width:12px;height:20.0px;background:rgba(0,0,0,0.12)"></div>
<div class="a" style="left:976.5px;top:440.5px;width:1px;height:20.0px;background:rgba(0,0,0,0.25)"></div>
<div class="a" style="left:991px;top:440.5px;width:1px;height:20.0px;background:rgba(0,0,0,0.25)"></div>
<div class="a" style="left:1005.3px;top:440.5px;width:1px;height:20.0px;background:rgba(0,0,0,0.25)"></div>
<div class="a" style="left:838.5px;top:459.9px;width:181.5px;height:0.8px;background:rgba(0,0,0,0.3)"></div>
<div class="a" style="left:821px;top:443.0px;width:15px;height:15px;background:#f4f4f4;background-image:linear-gradient(45deg,#e0e0e0 25%,transparent 25%,transparent 75%,#e0e0e0 75%),linear-gradient(45deg,#e0e0e0 25%,transparent 25%,transparent 75%,#e0e0e0 75%);background-size:4px 4px;background-position:0 0,2px 2px"></div>
<div class="t" style="left:856px;top:447.0px;font-size:9.3px;color:#e6cccc">F</div>
<div class="a" style="left:818px;top:460.5px;width:20.5px;height:20.0px;background:#2a2630"></div>
<div class="a" style="left:838.5px;top:460.5px;width:181.5px;height:20.0px;background:#4e3c6c"></div>
<div class="a" style="left:838.5px;top:460.5px;width:12px;height:20.0px;background:rgba(0,0,0,0.12)"></div>
<div class="a" style="left:976.5px;top:460.5px;width:1px;height:20.0px;background:rgba(0,0,0,0.25)"></div>
<div class="a" style="left:991px;top:460.5px;width:1px;height:20.0px;background:rgba(0,0,0,0.25)"></div>
<div class="a" style="left:1005.3px;top:460.5px;width:1px;height:20.0px;background:rgba(0,0,0,0.25)"></div>
<div class="a" style="left:838.5px;top:479.9px;width:181.5px;height:0.8px;background:rgba(0,0,0,0.3)"></div>
<div class="a" style="left:821px;top:463.0px;width:15px;height:15px;background:#f4f4f4;background-image:linear-gradient(45deg,#e0e0e0 25%,transparent 25%,transparent 75%,#e0e0e0 75%),linear-gradient(45deg,#e0e0e0 25%,transparent 25%,transparent 75%,#e0e0e0 75%);background-size:4px 4px;background-position:0 0,2px 2px"></div>
<div class="t" style="left:856px;top:467.0px;font-size:9.3px;color:#e2d6ee">S/H</div>
<div class="a" style="left:818px;top:480.5px;width:20.5px;height:20.0px;background:#5e4626"></div>
<div class="a" style="left:838.5px;top:480.5px;width:181.5px;height:20.0px;background:#6e5228"></div>
<div class="a" style="left:838.5px;top:480.5px;width:12px;height:20.0px;background:rgba(0,0,0,0.12)"></div>
<div class="a" style="left:976.5px;top:480.5px;width:1px;height:20.0px;background:rgba(0,0,0,0.25)"></div>
<div class="a" style="left:991px;top:480.5px;width:1px;height:20.0px;background:rgba(0,0,0,0.25)"></div>
<div class="a" style="left:1005.3px;top:480.5px;width:1px;height:20.0px;background:rgba(0,0,0,0.25)"></div>
<div class="a" style="left:838.5px;top:499.9px;width:181.5px;height:0.8px;background:rgba(0,0,0,0.3)"></div>
<div class="a" style="left:821px;top:483.0px;width:15px;height:15px;background:#f4f4f4;background-image:linear-gradient(45deg,#e0e0e0 25%,transparent 25%,transparent 75%,#e0e0e0 75%),linear-gradient(45deg,#e0e0e0 25%,transparent 25%,transparent 75%,#e0e0e0 75%);background-size:4px 4px;background-position:0 0,2px 2px"></div>
<div class="t" style="left:856px;top:487.0px;font-size:9.3px;color:#eee0c4">O</div>
<div class="a" style="left:818px;top:500.5px;width:20.5px;height:20.299999999999955px;background:#1f2022"></div>
<div class="a" style="left:838.5px;top:500.5px;width:124px;height:20.299999999999955px;background:#1b5473"></div>
<div class="a" style="left:962.5px;top:500.5px;width:57.5px;height:20.299999999999955px;background:#5c5928"></div>
<div class="a" style="left:838.5px;top:500.5px;width:12px;height:20.299999999999955px;background:rgba(0,0,0,0.12)"></div>
<div class="a" style="left:976.5px;top:500.5px;width:1px;height:20.299999999999955px;background:rgba(0,0,0,0.25)"></div>
<div class="a" style="left:991px;top:500.5px;width:1px;height:20.299999999999955px;background:rgba(0,0,0,0.25)"></div>
<div class="a" style="left:1005.3px;top:500.5px;width:1px;height:20.299999999999955px;background:rgba(0,0,0,0.25)"></div>
<div class="a" style="left:838.5px;top:520.1999999999999px;width:181.5px;height:0.8px;background:rgba(0,0,0,0.3)"></div>
<div class="a" style="left:821px;top:503.15px;width:15px;height:15px;background:#f4f4f4;background-image:linear-gradient(45deg,#e0e0e0 25%,transparent 25%,transparent 75%,#e0e0e0 75%),linear-gradient(45deg,#e0e0e0 25%,transparent 25%,transparent 75%,#e0e0e0 75%);background-size:4px 4px;background-position:0 0,2px 2px"></div>
<div class="t" style="left:856px;top:507.15px;font-size:9.3px;color:#eef4f8">R</div>
<div class="a" style="left:818px;top:520.8px;width:20.5px;height:20.200000000000045px;background:#262729"></div>
<div class="a" style="left:838.5px;top:520.8px;width:181.5px;height:20.200000000000045px;background:#3b3d3f"></div>
<div class="a" style="left:838.5px;top:520.8px;width:12px;height:20.200000000000045px;background:rgba(0,0,0,0.12)"></div>
<div class="a" style="left:976.5px;top:520.8px;width:1px;height:20.200000000000045px;background:rgba(0,0,0,0.25)"></div>
<div class="a" style="left:991px;top:520.8px;width:1px;height:20.200000000000045px;background:rgba(0,0,0,0.25)"></div>
<div class="a" style="left:1005.3px;top:520.8px;width:1px;height:20.200000000000045px;background:rgba(0,0,0,0.25)"></div>
<div class="a" style="left:838.5px;top:540.4px;width:181.5px;height:0.8px;background:rgba(0,0,0,0.3)"></div>
<div class="a" style="left:821px;top:523.4px;width:15px;height:15px;background:#fbfbfb"></div>
<div class="t" style="left:856px;top:527.4px;font-size:9.3px;color:#e0e0e0">B</div>
<svg style="left:0;top:0" width="1024" height="546">
<use href="#eye" x="803.8" y="445.3" width="12" height="10.5" style="color:#e8e8e8"/>
<use href="#lockopen" x="979.5" y="445.5" width="9.5" height="10.5" style="color:#b07a80"/>
<text x="993.2" y="454.8" font-family="Liberation Serif" font-style="italic" font-size="15px" fill="#b07a80">α</text>
<use href="#chk3" x="1007" y="445.0" width="11" height="11" style="color:#b07a80"/>
<path d="M840.5 443.0 H846 L849 446.0 V449.0 M840.5 443.0 V446.5 M843 444.5 L847.5 448.5" fill="none" stroke="#e6cccc" stroke-width="1"/>
<use href="#eye" x="803.8" y="465.3" width="12" height="10.5" style="color:#e8e8e8"/>
<use href="#lockopen" x="979.5" y="465.5" width="9.5" height="10.5" style="color:#9c8cb8"/>
<text x="993.2" y="474.8" font-family="Liberation Serif" font-style="italic" font-size="15px" fill="#9c8cb8">α</text>
<use href="#chk3" x="1007" y="465.0" width="11" height="11" style="color:#9c8cb8"/>
<path d="M840.5 463.0 H846 L849 466.0 V469.0 M840.5 463.0 V466.5 M843 464.5 L847.5 468.5" fill="none" stroke="#e2d6ee" stroke-width="1"/>
<use href="#eye" x="803.8" y="485.3" width="12" height="10.5" style="color:#e8e8e8"/>
<use href="#lockopen" x="979.5" y="485.5" width="9.5" height="10.5" style="color:#b4a07c"/>
<text x="993.2" y="494.8" font-family="Liberation Serif" font-style="italic" font-size="15px" fill="#b4a07c">α</text>
<use href="#chk3" x="1007" y="485.0" width="11" height="11" style="color:#b4a07c"/>
<path d="M840.5 483.0 H846 L849 486.0 V489.0 M840.5 483.0 V486.5 M843 484.5 L847.5 488.5" fill="none" stroke="#eee0c4" stroke-width="1"/>
<use href="#eye" x="803.8" y="505.4" width="12" height="10.5" style="color:#e8e8e8"/>
<use href="#lockopen" x="979.5" y="505.65" width="9.5" height="10.5" style="color:#b4b07c"/>
<text x="993.2" y="514.9" font-family="Liberation Serif" font-style="italic" font-size="15px" fill="#b4b07c">α</text>
<use href="#chk3" x="1007" y="505.15" width="11" height="11" style="color:#b4b07c"/>
<path d="M840.5 503.0 H846 L849 506.0 V509.0 M840.5 503.0 V506.5 M843 504.5 L847.5 508.5" fill="none" stroke="#eef4f8" stroke-width="1"/>
<use href="#eye" x="803.8" y="525.7" width="12" height="10.5" style="color:#e8e8e8"/>
<use href="#lock" x="979.5" y="525.4" width="9.5" height="11" style="color:#f0f0f0"/>
<text x="993.2" y="535.2" font-family="Liberation Serif" font-style="italic" font-size="15px" fill="#7e8082">α</text>
<use href="#chk3" x="1007" y="525.4" width="11" height="11" style="color:#7e8082"/>
<path d="M840.5 523.3 H846 L849 526.3 V529.3 M840.5 523.3 V526.8 M843 524.8 L847.5 528.8" fill="none" stroke="#e0e0e0" stroke-width="1"/>
<rect x="840" y="511" width="9.5" height="6" fill="none" stroke="#9ad0ea" stroke-width="1"/><path d="M843.5 512.5 L846.5 514 L843.5 515.5 Z" fill="#9ad0ea"/>
<use href="#bulb" x="965" y="505" width="11" height="11" style="color:#f0eedc"/>
</svg>
<!-- TASKBAR -->
<div class="a" style="left:0;top:545.5px;width:1024px;height:30.5px;background:#1b1c1e"></div>
<div class="a" style="left:53px;top:545.5px;width:35px;height:30.5px;background:#38393c"></div>
<div class="a" style="left:92px;top:546px;width:32px;height:30px;background:#232426"></div>
<div class="a" style="left:125.5px;top:546px;width:33px;height:30px;background:#0f1011"></div>
<div class="a" style="left:132.7px;top:551.2px;width:19.6px;height:19.6px;border-radius:50%;background:conic-gradient(from 0deg,#ff50d0,#f0a0c0 80deg,#e0e070 130deg,#50d8d0 190deg,#40b0f0 240deg,#e0a0f0 300deg,#ff50d0)"></div>
<svg style="left:0;top:540" width="1024" height="36">
 <g fill="#e8e8e8">
  <circle cx="10.5" cy="12" r="1.5"/><circle cx="7.5" cy="20.5" r="2"/><circle cx="12.5" cy="27.5" r="2.3"/>
  <path d="M16 14.5 L19 12.5 L24 19 L19 25 L16 23 L19.5 19 Z"/>
 </g>
 <!-- firefox -->
 <defs>
  <radialGradient id="ff1" cx="0.6" cy="0.3" r="0.8"><stop offset="0" stop-color="#ffd84a"/><stop offset="0.45" stop-color="#ff7a2a"/><stop offset="1" stop-color="#e8255a"/></radialGradient>
  <radialGradient id="ff2" cx="0.5" cy="0.5" r="0.5"><stop offset="0" stop-color="#7a3ce0"/><stop offset="1" stop-color="#5b2bb8"/></radialGradient>
  <linearGradient id="kr" x1="0" y1="0" x2="1" y2="1"><stop offset="0" stop-color="#ff50d0"/><stop offset="0.35" stop-color="#f6a0f0"/><stop offset="0.6" stop-color="#60d8f0"/><stop offset="1" stop-color="#30a0e0"/></linearGradient>
 </defs>
 <circle cx="70" cy="21.5" r="11" fill="url(#ff1)"/>
 <path d="M72.5 9 C78 11.5 81.5 16 81.5 21 C79 17 76 15.5 73 15.5 Z" fill="#ffd040"/>
 <circle cx="71.5" cy="21" r="5.8" fill="url(#ff2)"/>
 <path d="M59.5 20 C60.5 15 64 12.5 67 12.5 C64.5 15 64 18 65.5 21 C66.5 24 69.5 26 73 26 C77 26 79 24 80 21 C80 27 75.5 31 70 31 C64 31 59 26.5 59.5 20 Z" fill="#ff6a2a" opacity="0.9"/>
 <!-- folder -->
 <rect x="95" y="11" width="23" height="20" fill="#111214"/>
 <rect x="95" y="14" width="23" height="4" fill="#f4f4f4"/>
 <rect x="95" y="10.5" width="8" height="3" fill="#111214"/>
 <!-- krita -->
 <path d="M134.5 13 L143 21.5" stroke="#2a1838" stroke-width="2.6"/>
 <circle cx="145.5" cy="24" r="2" fill="#1e2a24"/>
 <!-- tray -->
 <g fill="#d8d8d8">
  <path d="M796 23 C796 18 798 16 800.3 16 C802.5 16 804.5 18 804.5 23 L806 25 H794.5 Z"/>
  <circle cx="800.3" cy="26.5" r="1.2"/>
  <path d="M795 16 L797.5 14 M805.5 16 L803 14" stroke="#d8d8d8" stroke-width="1"/>
 </g>
 <path d="M824 15 L829 24 L819 24 Z" fill="#70c040"/>
 <path d="M816 26 L822 22 L822 29 Z" fill="#e8e040"/>
 <path d="M833 26 L827 22 L827 29 Z" fill="#e040a0"/>
 <path d="M819 30 L824.5 26 L830 30 L824.5 33 Z" fill="#3060d0"/>
 <path d="M842.5 18.5 H845.5 L850 14.5 V29.5 L845.5 25.5 H842.5 Z" fill="#e0e0e0"/>
 <path d="M852 17 C854.5 19.5 854.5 24.5 852 27" stroke="#7a7a7a" stroke-width="1.2" fill="none"/>
 <rect x="868.5" y="14.5" width="8.5" height="14" rx="1" fill="none" stroke="#cfcfcf" stroke-width="1.2"/>
 <rect x="870.5" y="21" width="4.5" height="5" fill="#cfcfcf"/><rect x="870.5" y="16" width="4.5" height="2.5" fill="#cfcfcf"/>
 <g fill="none" stroke="#cfcfcf" stroke-width="1.2">
  <path d="M888.5 19 C893 14.5 900 14.5 904.5 19"/>
  <path d="M891 22 C894 19 899 19 902 22"/>
  <path d="M893.5 25 C895 23.5 898 23.5 899.5 25"/>
 </g>
 <circle cx="896.5" cy="28" r="1.2" fill="#cfcfcf"/>
 <path d="M914 24.5 L919 19.5 L924 24.5 Z" fill="#e8e8e8"/>
 <rect x="998.5" y="12" width="18" height="18" fill="none" stroke="#bdbdbd" stroke-width="1.2"/>
 <path d="M1000 27 H1015" stroke="#9a9a9a" stroke-width="1"/>
</svg>
<div class="t" style="left:934px;top:553px;font-size:19.5px;color:#e6e6e6">22:03</div>
</body></html>
